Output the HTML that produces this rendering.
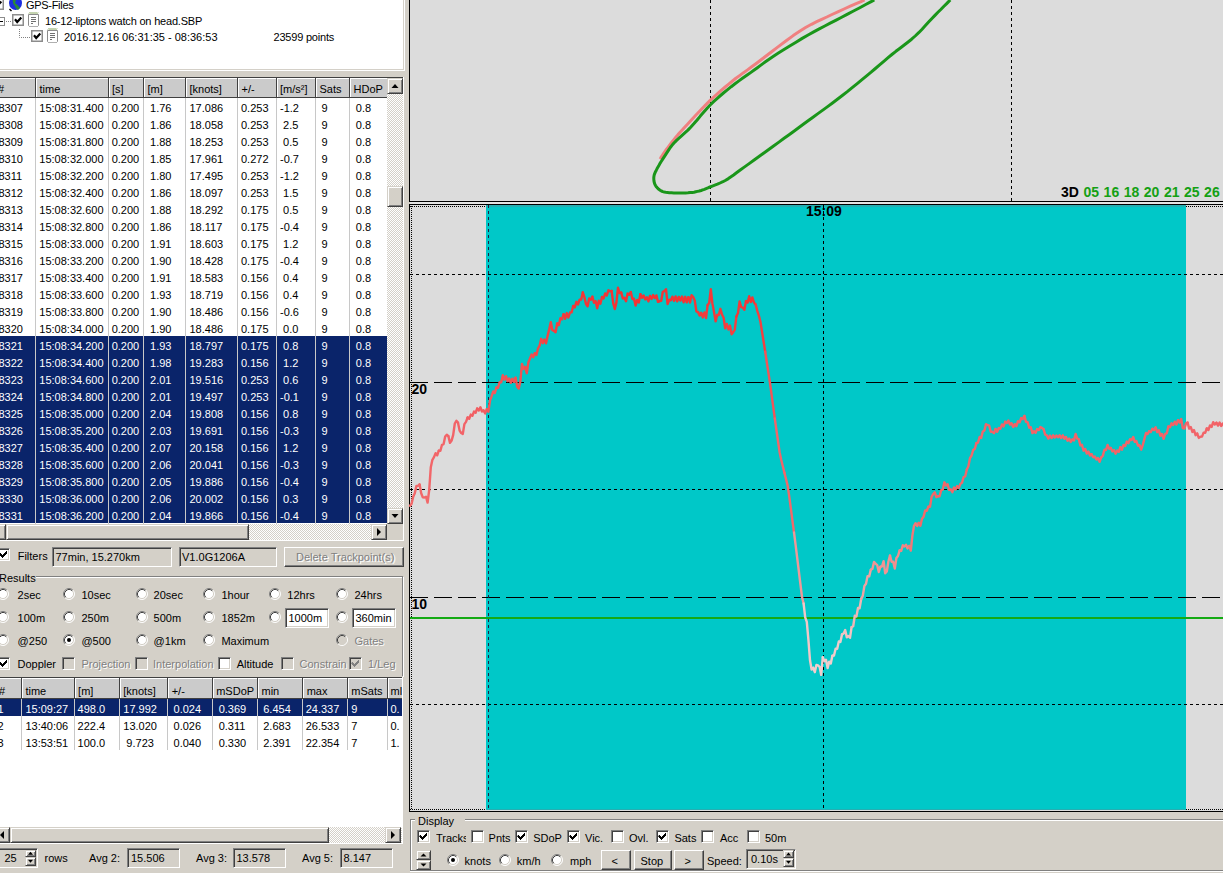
<!DOCTYPE html>
<html><head><meta charset="utf-8"><style>
html,body{margin:0;padding:0;}
body{width:1223px;height:873px;position:relative;overflow:hidden;background:#d4d0c8;font-family:"Liberation Sans", sans-serif;}
body div, body svg{position:absolute;box-sizing:content-box;}
.t{white-space:pre;}
</style></head><body>
<div style="left:0px;top:0px;width:1223px;height:873px;background:#d4d0c8"></div><div style="left:0px;top:0px;width:403px;height:69px;background:#fff"></div><div style="left:0px;top:69px;width:404px;height:1px;background:#d4d0c8"></div><div style="left:403px;top:0px;width:1px;height:70px;background:#d4d0c8"></div><div style="left:0px;top:70px;width:405px;height:1px;background:#fff"></div><div style="left:404px;top:0px;width:1px;height:71px;background:#fff"></div><svg style="left:-8px;top:-2px" width="12" height="12"><rect x="0.75" y="0.75" width="10.5" height="10.5" fill="#fff" stroke="#8c8c8c" stroke-width="1.5"/><polyline points="3,5.3 5.2,8 9.3,3.6" fill="none" stroke="#000" stroke-width="2.2"/></svg><svg style="left:8px;top:-3px" width="16" height="16"><ellipse cx="7.5" cy="6" rx="6.5" ry="7" fill="#1c2ee0"/><path d="M6 0 Q9 3 7 6 Q10 8 12 11 L10 13 Q7 11 7 9 Q4 7 5 2Z" fill="#2a8a3a"/><path d="M1.5 12 L3.5 14" stroke="#000" stroke-width="1.5"/></svg><div class="t" style="left:26px;top:0.49px;font-size:11px;line-height:11px;color:#000;letter-spacing:-0.3px">GPS-Files</div><div style="left:-2px;top:17px;width:5px;height:7px;border:1px solid #8c8c8c;background:#fff"></div><div style="left:0px;top:21px;width:3px;height:1px;background:#000"></div><svg style="left:6px;top:21px" width="6" height="1"><line x1="0" y1="0.5" x2="6" y2="0.5" stroke="#808080" stroke-dasharray="1 1"/></svg><svg style="left:12px;top:14px" width="12" height="12"><rect x="0.75" y="0.75" width="10.5" height="10.5" fill="#fff" stroke="#8c8c8c" stroke-width="1.5"/><polyline points="3,5.3 5.2,8 9.3,3.6" fill="none" stroke="#000" stroke-width="2.2"/></svg><svg style="left:28px;top:12px" width="12" height="16"><path d="M0.5 2.5 H10.5 V13.5 L9.5 14.5 H1.5 L0.5 13.5 Z" fill="#fff" stroke="#8c8c8c"/><path d="M1.5 14.5 H9.5" stroke="#b0b0b0"/><path d="M1 1.5 L2 0.5 L3 1.5 L4 0.5 L5 1.5 L6 0.5 L7 1.5 L8 0.5 L9 1.5 L10 0.5" stroke="#7a9a4a" fill="none"/><path d="M3 5.5h5M3 7.5h5M3 9.5h5M3 11.5h2" stroke="#707070"/></svg><div class="t" style="left:45px;top:15.99px;font-size:11px;line-height:11px;color:#000;letter-spacing:-0.2px">16-12-liptons watch on head.SBP</div><svg style="left:19px;top:29px" width="12" height="10"><path d="M0.5 0 V8.5 H12" stroke="#808080" fill="none" stroke-dasharray="1 1"/></svg><svg style="left:31px;top:30px" width="12" height="12"><rect x="0.75" y="0.75" width="10.5" height="10.5" fill="#fff" stroke="#8c8c8c" stroke-width="1.5"/><polyline points="3,5.3 5.2,8 9.3,3.6" fill="none" stroke="#000" stroke-width="2.2"/></svg><svg style="left:47px;top:28px" width="12" height="16"><path d="M0.5 2.5 H10.5 V13.5 L9.5 14.5 H1.5 L0.5 13.5 Z" fill="#fff" stroke="#8c8c8c"/><path d="M1.5 14.5 H9.5" stroke="#b0b0b0"/><path d="M1 1.5 L2 0.5 L3 1.5 L4 0.5 L5 1.5 L6 0.5 L7 1.5 L8 0.5 L9 1.5 L10 0.5" stroke="#7a9a4a" fill="none"/><path d="M3 5.5h5M3 7.5h5M3 9.5h5M3 11.5h2" stroke="#707070"/></svg><div class="t" style="left:64px;top:31.99px;font-size:11px;line-height:11px;color:#000;">2016.12.16 06:31:35 - 08:36:53</div><div class="t" style="left:273.5px;top:31.99px;font-size:11px;line-height:11px;color:#000;letter-spacing:-0.2px">23599 points</div><div style="left:0px;top:77px;width:403px;height:1px;background:#404040"></div><div style="left:0px;top:540px;width:404px;height:1px;background:#fff"></div><div style="left:403px;top:77px;width:1px;height:464px;background:#fff"></div><div style="left:0px;top:98px;width:387px;height:426px;background:#fff"></div><div style="left:0px;top:78px;width:387px;height:1px;background:#fff"></div><div style="left:0px;top:79px;width:387px;height:18px;background:#cbcbcb"></div><div style="left:0px;top:97px;width:387px;height:1px;background:#404040"></div><div style="left:35px;top:78px;width:1px;height:20px;background:#404040"></div><div style="left:36px;top:78px;width:1px;height:19px;background:#fff"></div><div style="left:108px;top:78px;width:1px;height:20px;background:#404040"></div><div style="left:109px;top:78px;width:1px;height:19px;background:#fff"></div><div style="left:143px;top:78px;width:1px;height:20px;background:#404040"></div><div style="left:144px;top:78px;width:1px;height:19px;background:#fff"></div><div style="left:185px;top:78px;width:1px;height:20px;background:#404040"></div><div style="left:186px;top:78px;width:1px;height:19px;background:#fff"></div><div style="left:237px;top:78px;width:1px;height:20px;background:#404040"></div><div style="left:238px;top:78px;width:1px;height:19px;background:#fff"></div><div style="left:276px;top:78px;width:1px;height:20px;background:#404040"></div><div style="left:277px;top:78px;width:1px;height:19px;background:#fff"></div><div style="left:315px;top:78px;width:1px;height:20px;background:#404040"></div><div style="left:316px;top:78px;width:1px;height:19px;background:#fff"></div><div style="left:349px;top:78px;width:1px;height:20px;background:#404040"></div><div style="left:350px;top:78px;width:1px;height:19px;background:#fff"></div><div class="t" style="left:-2px;top:84.19px;font-size:11px;line-height:11px;color:#000;">#</div><div class="t" style="left:39.5px;top:84.19px;font-size:11px;line-height:11px;color:#000;">time</div><div class="t" style="left:112px;top:84.19px;font-size:11px;line-height:11px;color:#000;">[s]</div><div class="t" style="left:147.5px;top:84.19px;font-size:11px;line-height:11px;color:#000;">[m]</div><div class="t" style="left:189.5px;top:84.19px;font-size:11px;line-height:11px;color:#000;">[knots]</div><div class="t" style="left:241.5px;top:84.19px;font-size:11px;line-height:11px;color:#000;">+/-</div><div class="t" style="left:280px;top:84.19px;font-size:11px;line-height:11px;color:#000;">[m/s²]</div><div class="t" style="left:319.5px;top:84.19px;font-size:11px;line-height:11px;color:#000;">Sats</div><div class="t" style="left:353.5px;top:84.19px;font-size:11px;line-height:11px;color:#000;">HDoP</div><div style="left:0px;top:336px;width:387px;height:187px;background:#0a246a"></div><div style="left:35px;top:98px;width:1px;height:426px;background:#c8c8c8"></div><div style="left:108px;top:98px;width:1px;height:426px;background:#c8c8c8"></div><div style="left:143px;top:98px;width:1px;height:426px;background:#c8c8c8"></div><div style="left:185px;top:98px;width:1px;height:426px;background:#c8c8c8"></div><div style="left:237px;top:98px;width:1px;height:426px;background:#c8c8c8"></div><div style="left:276px;top:98px;width:1px;height:426px;background:#c8c8c8"></div><div style="left:315px;top:98px;width:1px;height:426px;background:#c8c8c8"></div><div style="left:349px;top:98px;width:1px;height:426px;background:#c8c8c8"></div><div class="t" style="left:-1.5px;top:103.09px;font-size:11px;line-height:11px;color:#000;">8307</div><div class="t" style="left:39.3px;top:103.09px;font-size:11px;line-height:11px;color:#000;">15:08:31.400</div><div class="t" style="left:111.7px;top:103.09px;font-size:11px;line-height:11px;color:#000;">0.200</div><div class="t" style="left:150.06px;top:103.09px;font-size:11px;line-height:11px;color:#000;">1.76</div><div class="t" style="left:189.5px;top:103.09px;font-size:11px;line-height:11px;color:#000;">17.086</div><div class="t" style="left:241px;top:103.09px;font-size:11px;line-height:11px;color:#000;">0.253</div><div class="t" style="left:280px;top:103.09px;font-size:11px;line-height:11px;color:#000;">-1.2</div><div class="t" style="left:321.56px;top:103.09px;font-size:11px;line-height:11px;color:#000;">9</div><div class="t" style="left:355.86px;top:103.09px;font-size:11px;line-height:11px;color:#000;">0.8</div><div class="t" style="left:-1.5px;top:120.09px;font-size:11px;line-height:11px;color:#000;">8308</div><div class="t" style="left:39.3px;top:120.09px;font-size:11px;line-height:11px;color:#000;">15:08:31.600</div><div class="t" style="left:111.7px;top:120.09px;font-size:11px;line-height:11px;color:#000;">0.200</div><div class="t" style="left:150.06px;top:120.09px;font-size:11px;line-height:11px;color:#000;">1.86</div><div class="t" style="left:189.5px;top:120.09px;font-size:11px;line-height:11px;color:#000;">18.058</div><div class="t" style="left:241px;top:120.09px;font-size:11px;line-height:11px;color:#000;">0.253</div><div class="t" style="left:283.06px;top:120.09px;font-size:11px;line-height:11px;color:#000;">2.5</div><div class="t" style="left:321.56px;top:120.09px;font-size:11px;line-height:11px;color:#000;">9</div><div class="t" style="left:355.86px;top:120.09px;font-size:11px;line-height:11px;color:#000;">0.8</div><div class="t" style="left:-1.5px;top:137.09px;font-size:11px;line-height:11px;color:#000;">8309</div><div class="t" style="left:39.3px;top:137.09px;font-size:11px;line-height:11px;color:#000;">15:08:31.800</div><div class="t" style="left:111.7px;top:137.09px;font-size:11px;line-height:11px;color:#000;">0.200</div><div class="t" style="left:150.06px;top:137.09px;font-size:11px;line-height:11px;color:#000;">1.88</div><div class="t" style="left:189.5px;top:137.09px;font-size:11px;line-height:11px;color:#000;">18.253</div><div class="t" style="left:241px;top:137.09px;font-size:11px;line-height:11px;color:#000;">0.253</div><div class="t" style="left:283.06px;top:137.09px;font-size:11px;line-height:11px;color:#000;">0.5</div><div class="t" style="left:321.56px;top:137.09px;font-size:11px;line-height:11px;color:#000;">9</div><div class="t" style="left:355.86px;top:137.09px;font-size:11px;line-height:11px;color:#000;">0.8</div><div class="t" style="left:-1.5px;top:154.09px;font-size:11px;line-height:11px;color:#000;">8310</div><div class="t" style="left:39.3px;top:154.09px;font-size:11px;line-height:11px;color:#000;">15:08:32.000</div><div class="t" style="left:111.7px;top:154.09px;font-size:11px;line-height:11px;color:#000;">0.200</div><div class="t" style="left:150.06px;top:154.09px;font-size:11px;line-height:11px;color:#000;">1.85</div><div class="t" style="left:189.5px;top:154.09px;font-size:11px;line-height:11px;color:#000;">17.961</div><div class="t" style="left:241px;top:154.09px;font-size:11px;line-height:11px;color:#000;">0.272</div><div class="t" style="left:280px;top:154.09px;font-size:11px;line-height:11px;color:#000;">-0.7</div><div class="t" style="left:321.56px;top:154.09px;font-size:11px;line-height:11px;color:#000;">9</div><div class="t" style="left:355.86px;top:154.09px;font-size:11px;line-height:11px;color:#000;">0.8</div><div class="t" style="left:-1.5px;top:171.09px;font-size:11px;line-height:11px;color:#000;">8311</div><div class="t" style="left:39.3px;top:171.09px;font-size:11px;line-height:11px;color:#000;">15:08:32.200</div><div class="t" style="left:111.7px;top:171.09px;font-size:11px;line-height:11px;color:#000;">0.200</div><div class="t" style="left:150.06px;top:171.09px;font-size:11px;line-height:11px;color:#000;">1.80</div><div class="t" style="left:189.5px;top:171.09px;font-size:11px;line-height:11px;color:#000;">17.495</div><div class="t" style="left:241px;top:171.09px;font-size:11px;line-height:11px;color:#000;">0.253</div><div class="t" style="left:280px;top:171.09px;font-size:11px;line-height:11px;color:#000;">-1.2</div><div class="t" style="left:321.56px;top:171.09px;font-size:11px;line-height:11px;color:#000;">9</div><div class="t" style="left:355.86px;top:171.09px;font-size:11px;line-height:11px;color:#000;">0.8</div><div class="t" style="left:-1.5px;top:188.09px;font-size:11px;line-height:11px;color:#000;">8312</div><div class="t" style="left:39.3px;top:188.09px;font-size:11px;line-height:11px;color:#000;">15:08:32.400</div><div class="t" style="left:111.7px;top:188.09px;font-size:11px;line-height:11px;color:#000;">0.200</div><div class="t" style="left:150.06px;top:188.09px;font-size:11px;line-height:11px;color:#000;">1.86</div><div class="t" style="left:189.5px;top:188.09px;font-size:11px;line-height:11px;color:#000;">18.097</div><div class="t" style="left:241px;top:188.09px;font-size:11px;line-height:11px;color:#000;">0.253</div><div class="t" style="left:283.06px;top:188.09px;font-size:11px;line-height:11px;color:#000;">1.5</div><div class="t" style="left:321.56px;top:188.09px;font-size:11px;line-height:11px;color:#000;">9</div><div class="t" style="left:355.86px;top:188.09px;font-size:11px;line-height:11px;color:#000;">0.8</div><div class="t" style="left:-1.5px;top:205.09px;font-size:11px;line-height:11px;color:#000;">8313</div><div class="t" style="left:39.3px;top:205.09px;font-size:11px;line-height:11px;color:#000;">15:08:32.600</div><div class="t" style="left:111.7px;top:205.09px;font-size:11px;line-height:11px;color:#000;">0.200</div><div class="t" style="left:150.06px;top:205.09px;font-size:11px;line-height:11px;color:#000;">1.88</div><div class="t" style="left:189.5px;top:205.09px;font-size:11px;line-height:11px;color:#000;">18.292</div><div class="t" style="left:241px;top:205.09px;font-size:11px;line-height:11px;color:#000;">0.175</div><div class="t" style="left:283.06px;top:205.09px;font-size:11px;line-height:11px;color:#000;">0.5</div><div class="t" style="left:321.56px;top:205.09px;font-size:11px;line-height:11px;color:#000;">9</div><div class="t" style="left:355.86px;top:205.09px;font-size:11px;line-height:11px;color:#000;">0.8</div><div class="t" style="left:-1.5px;top:222.09px;font-size:11px;line-height:11px;color:#000;">8314</div><div class="t" style="left:39.3px;top:222.09px;font-size:11px;line-height:11px;color:#000;">15:08:32.800</div><div class="t" style="left:111.7px;top:222.09px;font-size:11px;line-height:11px;color:#000;">0.200</div><div class="t" style="left:150.06px;top:222.09px;font-size:11px;line-height:11px;color:#000;">1.86</div><div class="t" style="left:189.5px;top:222.09px;font-size:11px;line-height:11px;color:#000;">18.117</div><div class="t" style="left:241px;top:222.09px;font-size:11px;line-height:11px;color:#000;">0.175</div><div class="t" style="left:280px;top:222.09px;font-size:11px;line-height:11px;color:#000;">-0.4</div><div class="t" style="left:321.56px;top:222.09px;font-size:11px;line-height:11px;color:#000;">9</div><div class="t" style="left:355.86px;top:222.09px;font-size:11px;line-height:11px;color:#000;">0.8</div><div class="t" style="left:-1.5px;top:239.09px;font-size:11px;line-height:11px;color:#000;">8315</div><div class="t" style="left:39.3px;top:239.09px;font-size:11px;line-height:11px;color:#000;">15:08:33.000</div><div class="t" style="left:111.7px;top:239.09px;font-size:11px;line-height:11px;color:#000;">0.200</div><div class="t" style="left:150.06px;top:239.09px;font-size:11px;line-height:11px;color:#000;">1.91</div><div class="t" style="left:189.5px;top:239.09px;font-size:11px;line-height:11px;color:#000;">18.603</div><div class="t" style="left:241px;top:239.09px;font-size:11px;line-height:11px;color:#000;">0.175</div><div class="t" style="left:283.06px;top:239.09px;font-size:11px;line-height:11px;color:#000;">1.2</div><div class="t" style="left:321.56px;top:239.09px;font-size:11px;line-height:11px;color:#000;">9</div><div class="t" style="left:355.86px;top:239.09px;font-size:11px;line-height:11px;color:#000;">0.8</div><div class="t" style="left:-1.5px;top:256.09px;font-size:11px;line-height:11px;color:#000;">8316</div><div class="t" style="left:39.3px;top:256.09px;font-size:11px;line-height:11px;color:#000;">15:08:33.200</div><div class="t" style="left:111.7px;top:256.09px;font-size:11px;line-height:11px;color:#000;">0.200</div><div class="t" style="left:150.06px;top:256.09px;font-size:11px;line-height:11px;color:#000;">1.90</div><div class="t" style="left:189.5px;top:256.09px;font-size:11px;line-height:11px;color:#000;">18.428</div><div class="t" style="left:241px;top:256.09px;font-size:11px;line-height:11px;color:#000;">0.175</div><div class="t" style="left:280px;top:256.09px;font-size:11px;line-height:11px;color:#000;">-0.4</div><div class="t" style="left:321.56px;top:256.09px;font-size:11px;line-height:11px;color:#000;">9</div><div class="t" style="left:355.86px;top:256.09px;font-size:11px;line-height:11px;color:#000;">0.8</div><div class="t" style="left:-1.5px;top:273.09px;font-size:11px;line-height:11px;color:#000;">8317</div><div class="t" style="left:39.3px;top:273.09px;font-size:11px;line-height:11px;color:#000;">15:08:33.400</div><div class="t" style="left:111.7px;top:273.09px;font-size:11px;line-height:11px;color:#000;">0.200</div><div class="t" style="left:150.06px;top:273.09px;font-size:11px;line-height:11px;color:#000;">1.91</div><div class="t" style="left:189.5px;top:273.09px;font-size:11px;line-height:11px;color:#000;">18.583</div><div class="t" style="left:241px;top:273.09px;font-size:11px;line-height:11px;color:#000;">0.156</div><div class="t" style="left:283.06px;top:273.09px;font-size:11px;line-height:11px;color:#000;">0.4</div><div class="t" style="left:321.56px;top:273.09px;font-size:11px;line-height:11px;color:#000;">9</div><div class="t" style="left:355.86px;top:273.09px;font-size:11px;line-height:11px;color:#000;">0.8</div><div class="t" style="left:-1.5px;top:290.09px;font-size:11px;line-height:11px;color:#000;">8318</div><div class="t" style="left:39.3px;top:290.09px;font-size:11px;line-height:11px;color:#000;">15:08:33.600</div><div class="t" style="left:111.7px;top:290.09px;font-size:11px;line-height:11px;color:#000;">0.200</div><div class="t" style="left:150.06px;top:290.09px;font-size:11px;line-height:11px;color:#000;">1.93</div><div class="t" style="left:189.5px;top:290.09px;font-size:11px;line-height:11px;color:#000;">18.719</div><div class="t" style="left:241px;top:290.09px;font-size:11px;line-height:11px;color:#000;">0.156</div><div class="t" style="left:283.06px;top:290.09px;font-size:11px;line-height:11px;color:#000;">0.4</div><div class="t" style="left:321.56px;top:290.09px;font-size:11px;line-height:11px;color:#000;">9</div><div class="t" style="left:355.86px;top:290.09px;font-size:11px;line-height:11px;color:#000;">0.8</div><div class="t" style="left:-1.5px;top:307.09px;font-size:11px;line-height:11px;color:#000;">8319</div><div class="t" style="left:39.3px;top:307.09px;font-size:11px;line-height:11px;color:#000;">15:08:33.800</div><div class="t" style="left:111.7px;top:307.09px;font-size:11px;line-height:11px;color:#000;">0.200</div><div class="t" style="left:150.06px;top:307.09px;font-size:11px;line-height:11px;color:#000;">1.90</div><div class="t" style="left:189.5px;top:307.09px;font-size:11px;line-height:11px;color:#000;">18.486</div><div class="t" style="left:241px;top:307.09px;font-size:11px;line-height:11px;color:#000;">0.156</div><div class="t" style="left:280px;top:307.09px;font-size:11px;line-height:11px;color:#000;">-0.6</div><div class="t" style="left:321.56px;top:307.09px;font-size:11px;line-height:11px;color:#000;">9</div><div class="t" style="left:355.86px;top:307.09px;font-size:11px;line-height:11px;color:#000;">0.8</div><div class="t" style="left:-1.5px;top:324.09px;font-size:11px;line-height:11px;color:#000;">8320</div><div class="t" style="left:39.3px;top:324.09px;font-size:11px;line-height:11px;color:#000;">15:08:34.000</div><div class="t" style="left:111.7px;top:324.09px;font-size:11px;line-height:11px;color:#000;">0.200</div><div class="t" style="left:150.06px;top:324.09px;font-size:11px;line-height:11px;color:#000;">1.90</div><div class="t" style="left:189.5px;top:324.09px;font-size:11px;line-height:11px;color:#000;">18.486</div><div class="t" style="left:241px;top:324.09px;font-size:11px;line-height:11px;color:#000;">0.175</div><div class="t" style="left:283.06px;top:324.09px;font-size:11px;line-height:11px;color:#000;">0.0</div><div class="t" style="left:321.56px;top:324.09px;font-size:11px;line-height:11px;color:#000;">9</div><div class="t" style="left:355.86px;top:324.09px;font-size:11px;line-height:11px;color:#000;">0.8</div><div class="t" style="left:-1.5px;top:341.09px;font-size:11px;line-height:11px;color:#fff;">8321</div><div class="t" style="left:39.3px;top:341.09px;font-size:11px;line-height:11px;color:#fff;">15:08:34.200</div><div class="t" style="left:111.7px;top:341.09px;font-size:11px;line-height:11px;color:#fff;">0.200</div><div class="t" style="left:150.06px;top:341.09px;font-size:11px;line-height:11px;color:#fff;">1.93</div><div class="t" style="left:189.5px;top:341.09px;font-size:11px;line-height:11px;color:#fff;">18.797</div><div class="t" style="left:241px;top:341.09px;font-size:11px;line-height:11px;color:#fff;">0.175</div><div class="t" style="left:283.06px;top:341.09px;font-size:11px;line-height:11px;color:#fff;">0.8</div><div class="t" style="left:321.56px;top:341.09px;font-size:11px;line-height:11px;color:#fff;">9</div><div class="t" style="left:355.86px;top:341.09px;font-size:11px;line-height:11px;color:#fff;">0.8</div><div class="t" style="left:-1.5px;top:358.09px;font-size:11px;line-height:11px;color:#fff;">8322</div><div class="t" style="left:39.3px;top:358.09px;font-size:11px;line-height:11px;color:#fff;">15:08:34.400</div><div class="t" style="left:111.7px;top:358.09px;font-size:11px;line-height:11px;color:#fff;">0.200</div><div class="t" style="left:150.06px;top:358.09px;font-size:11px;line-height:11px;color:#fff;">1.98</div><div class="t" style="left:189.5px;top:358.09px;font-size:11px;line-height:11px;color:#fff;">19.283</div><div class="t" style="left:241px;top:358.09px;font-size:11px;line-height:11px;color:#fff;">0.156</div><div class="t" style="left:283.06px;top:358.09px;font-size:11px;line-height:11px;color:#fff;">1.2</div><div class="t" style="left:321.56px;top:358.09px;font-size:11px;line-height:11px;color:#fff;">9</div><div class="t" style="left:355.86px;top:358.09px;font-size:11px;line-height:11px;color:#fff;">0.8</div><div class="t" style="left:-1.5px;top:375.09px;font-size:11px;line-height:11px;color:#fff;">8323</div><div class="t" style="left:39.3px;top:375.09px;font-size:11px;line-height:11px;color:#fff;">15:08:34.600</div><div class="t" style="left:111.7px;top:375.09px;font-size:11px;line-height:11px;color:#fff;">0.200</div><div class="t" style="left:150.06px;top:375.09px;font-size:11px;line-height:11px;color:#fff;">2.01</div><div class="t" style="left:189.5px;top:375.09px;font-size:11px;line-height:11px;color:#fff;">19.516</div><div class="t" style="left:241px;top:375.09px;font-size:11px;line-height:11px;color:#fff;">0.253</div><div class="t" style="left:283.06px;top:375.09px;font-size:11px;line-height:11px;color:#fff;">0.6</div><div class="t" style="left:321.56px;top:375.09px;font-size:11px;line-height:11px;color:#fff;">9</div><div class="t" style="left:355.86px;top:375.09px;font-size:11px;line-height:11px;color:#fff;">0.8</div><div class="t" style="left:-1.5px;top:392.09px;font-size:11px;line-height:11px;color:#fff;">8324</div><div class="t" style="left:39.3px;top:392.09px;font-size:11px;line-height:11px;color:#fff;">15:08:34.800</div><div class="t" style="left:111.7px;top:392.09px;font-size:11px;line-height:11px;color:#fff;">0.200</div><div class="t" style="left:150.06px;top:392.09px;font-size:11px;line-height:11px;color:#fff;">2.01</div><div class="t" style="left:189.5px;top:392.09px;font-size:11px;line-height:11px;color:#fff;">19.497</div><div class="t" style="left:241px;top:392.09px;font-size:11px;line-height:11px;color:#fff;">0.253</div><div class="t" style="left:280px;top:392.09px;font-size:11px;line-height:11px;color:#fff;">-0.1</div><div class="t" style="left:321.56px;top:392.09px;font-size:11px;line-height:11px;color:#fff;">9</div><div class="t" style="left:355.86px;top:392.09px;font-size:11px;line-height:11px;color:#fff;">0.8</div><div class="t" style="left:-1.5px;top:409.09px;font-size:11px;line-height:11px;color:#fff;">8325</div><div class="t" style="left:39.3px;top:409.09px;font-size:11px;line-height:11px;color:#fff;">15:08:35.000</div><div class="t" style="left:111.7px;top:409.09px;font-size:11px;line-height:11px;color:#fff;">0.200</div><div class="t" style="left:150.06px;top:409.09px;font-size:11px;line-height:11px;color:#fff;">2.04</div><div class="t" style="left:189.5px;top:409.09px;font-size:11px;line-height:11px;color:#fff;">19.808</div><div class="t" style="left:241px;top:409.09px;font-size:11px;line-height:11px;color:#fff;">0.156</div><div class="t" style="left:283.06px;top:409.09px;font-size:11px;line-height:11px;color:#fff;">0.8</div><div class="t" style="left:321.56px;top:409.09px;font-size:11px;line-height:11px;color:#fff;">9</div><div class="t" style="left:355.86px;top:409.09px;font-size:11px;line-height:11px;color:#fff;">0.8</div><div class="t" style="left:-1.5px;top:426.09px;font-size:11px;line-height:11px;color:#fff;">8326</div><div class="t" style="left:39.3px;top:426.09px;font-size:11px;line-height:11px;color:#fff;">15:08:35.200</div><div class="t" style="left:111.7px;top:426.09px;font-size:11px;line-height:11px;color:#fff;">0.200</div><div class="t" style="left:150.06px;top:426.09px;font-size:11px;line-height:11px;color:#fff;">2.03</div><div class="t" style="left:189.5px;top:426.09px;font-size:11px;line-height:11px;color:#fff;">19.691</div><div class="t" style="left:241px;top:426.09px;font-size:11px;line-height:11px;color:#fff;">0.156</div><div class="t" style="left:280px;top:426.09px;font-size:11px;line-height:11px;color:#fff;">-0.3</div><div class="t" style="left:321.56px;top:426.09px;font-size:11px;line-height:11px;color:#fff;">9</div><div class="t" style="left:355.86px;top:426.09px;font-size:11px;line-height:11px;color:#fff;">0.8</div><div class="t" style="left:-1.5px;top:443.09px;font-size:11px;line-height:11px;color:#fff;">8327</div><div class="t" style="left:39.3px;top:443.09px;font-size:11px;line-height:11px;color:#fff;">15:08:35.400</div><div class="t" style="left:111.7px;top:443.09px;font-size:11px;line-height:11px;color:#fff;">0.200</div><div class="t" style="left:150.06px;top:443.09px;font-size:11px;line-height:11px;color:#fff;">2.07</div><div class="t" style="left:189.5px;top:443.09px;font-size:11px;line-height:11px;color:#fff;">20.158</div><div class="t" style="left:241px;top:443.09px;font-size:11px;line-height:11px;color:#fff;">0.156</div><div class="t" style="left:283.06px;top:443.09px;font-size:11px;line-height:11px;color:#fff;">1.2</div><div class="t" style="left:321.56px;top:443.09px;font-size:11px;line-height:11px;color:#fff;">9</div><div class="t" style="left:355.86px;top:443.09px;font-size:11px;line-height:11px;color:#fff;">0.8</div><div class="t" style="left:-1.5px;top:460.09px;font-size:11px;line-height:11px;color:#fff;">8328</div><div class="t" style="left:39.3px;top:460.09px;font-size:11px;line-height:11px;color:#fff;">15:08:35.600</div><div class="t" style="left:111.7px;top:460.09px;font-size:11px;line-height:11px;color:#fff;">0.200</div><div class="t" style="left:150.06px;top:460.09px;font-size:11px;line-height:11px;color:#fff;">2.06</div><div class="t" style="left:189.5px;top:460.09px;font-size:11px;line-height:11px;color:#fff;">20.041</div><div class="t" style="left:241px;top:460.09px;font-size:11px;line-height:11px;color:#fff;">0.156</div><div class="t" style="left:280px;top:460.09px;font-size:11px;line-height:11px;color:#fff;">-0.3</div><div class="t" style="left:321.56px;top:460.09px;font-size:11px;line-height:11px;color:#fff;">9</div><div class="t" style="left:355.86px;top:460.09px;font-size:11px;line-height:11px;color:#fff;">0.8</div><div class="t" style="left:-1.5px;top:477.09px;font-size:11px;line-height:11px;color:#fff;">8329</div><div class="t" style="left:39.3px;top:477.09px;font-size:11px;line-height:11px;color:#fff;">15:08:35.800</div><div class="t" style="left:111.7px;top:477.09px;font-size:11px;line-height:11px;color:#fff;">0.200</div><div class="t" style="left:150.06px;top:477.09px;font-size:11px;line-height:11px;color:#fff;">2.05</div><div class="t" style="left:189.5px;top:477.09px;font-size:11px;line-height:11px;color:#fff;">19.886</div><div class="t" style="left:241px;top:477.09px;font-size:11px;line-height:11px;color:#fff;">0.156</div><div class="t" style="left:280px;top:477.09px;font-size:11px;line-height:11px;color:#fff;">-0.4</div><div class="t" style="left:321.56px;top:477.09px;font-size:11px;line-height:11px;color:#fff;">9</div><div class="t" style="left:355.86px;top:477.09px;font-size:11px;line-height:11px;color:#fff;">0.8</div><div class="t" style="left:-1.5px;top:494.09px;font-size:11px;line-height:11px;color:#fff;">8330</div><div class="t" style="left:39.3px;top:494.09px;font-size:11px;line-height:11px;color:#fff;">15:08:36.000</div><div class="t" style="left:111.7px;top:494.09px;font-size:11px;line-height:11px;color:#fff;">0.200</div><div class="t" style="left:150.06px;top:494.09px;font-size:11px;line-height:11px;color:#fff;">2.06</div><div class="t" style="left:189.5px;top:494.09px;font-size:11px;line-height:11px;color:#fff;">20.002</div><div class="t" style="left:241px;top:494.09px;font-size:11px;line-height:11px;color:#fff;">0.156</div><div class="t" style="left:283.06px;top:494.09px;font-size:11px;line-height:11px;color:#fff;">0.3</div><div class="t" style="left:321.56px;top:494.09px;font-size:11px;line-height:11px;color:#fff;">9</div><div class="t" style="left:355.86px;top:494.09px;font-size:11px;line-height:11px;color:#fff;">0.8</div><div class="t" style="left:-1.5px;top:511.09px;font-size:11px;line-height:11px;color:#fff;">8331</div><div class="t" style="left:39.3px;top:511.09px;font-size:11px;line-height:11px;color:#fff;">15:08:36.200</div><div class="t" style="left:111.7px;top:511.09px;font-size:11px;line-height:11px;color:#fff;">0.200</div><div class="t" style="left:150.06px;top:511.09px;font-size:11px;line-height:11px;color:#fff;">2.04</div><div class="t" style="left:189.5px;top:511.09px;font-size:11px;line-height:11px;color:#fff;">19.866</div><div class="t" style="left:241px;top:511.09px;font-size:11px;line-height:11px;color:#fff;">0.156</div><div class="t" style="left:280px;top:511.09px;font-size:11px;line-height:11px;color:#fff;">-0.4</div><div class="t" style="left:321.56px;top:511.09px;font-size:11px;line-height:11px;color:#fff;">9</div><div class="t" style="left:355.86px;top:511.09px;font-size:11px;line-height:11px;color:#fff;">0.8</div><div style="left:387px;top:94px;width:16px;height:414px;background-color:#d4d0c8;background-image:conic-gradient(#fff 25%, transparent 0 50%, #fff 0 75%, transparent 0);background-size:2px 2px;"></div><div style="left:387px;top:78px;width:14px;height:14px;background:#d4d0c8;border:1px solid;border-color:#d4d0c8 #404040 #404040 #d4d0c8;box-shadow:inset 1px 1px #fff, inset -1px -1px #808080;"></div><svg style="left:0;top:0" width="1223" height="873"><polygon points="391.5,88.0 398.5,88.0 395.0,84.0" fill="#000"/></svg><div style="left:387px;top:186px;width:14px;height:19px;background:#d4d0c8;border:1px solid;border-color:#d4d0c8 #404040 #404040 #d4d0c8;box-shadow:inset 1px 1px #fff, inset -1px -1px #808080;"></div><div style="left:387px;top:508px;width:14px;height:14px;background:#d4d0c8;border:1px solid;border-color:#d4d0c8 #404040 #404040 #d4d0c8;box-shadow:inset 1px 1px #fff, inset -1px -1px #808080;"></div><svg style="left:0;top:0" width="1223" height="873"><polygon points="391.5,514.0 398.5,514.0 395.0,518.0" fill="#000"/></svg><div style="left:0px;top:524px;width:387px;height:16px;background-color:#d4d0c8;background-image:conic-gradient(#fff 25%, transparent 0 50%, #fff 0 75%, transparent 0);background-size:2px 2px;"></div><div style="left:-10px;top:524px;width:14px;height:14px;background:#d4d0c8;border:1px solid;border-color:#d4d0c8 #404040 #404040 #d4d0c8;box-shadow:inset 1px 1px #fff, inset -1px -1px #808080;"></div><svg style="left:0;top:0" width="1223" height="873"><polygon points="0.0,528.0 0.0,536.0 -4.0,532.0" fill="#000"/></svg><div style="left:6px;top:524px;width:241px;height:14px;background:#d4d0c8;border:1px solid;border-color:#d4d0c8 #404040 #404040 #d4d0c8;box-shadow:inset 1px 1px #fff, inset -1px -1px #808080;"></div><div style="left:371px;top:524px;width:14px;height:14px;background:#d4d0c8;border:1px solid;border-color:#d4d0c8 #404040 #404040 #d4d0c8;box-shadow:inset 1px 1px #fff, inset -1px -1px #808080;"></div><svg style="left:0;top:0" width="1223" height="873"><polygon points="377.0,528.0 377.0,536.0 381.0,532.0" fill="#000"/></svg><div style="left:387px;top:524px;width:16px;height:16px;background:#d4d0c8"></div><div style="left:-3px;top:548px;width:11px;height:11px;background:#fff;border:1px solid;border-color:#808080 #fff #fff #808080;box-shadow:inset 1px 1px #404040, inset -1px -1px #d4d0c8;"></div><svg style="left:-3px;top:548px" width="13" height="13"><path d="M3 5h1v1h1v1h1v-1h1v-1h1v-1h1v-1h1v3h-1v1h-1v1h-1v1h-1v1h-1v-1h-1v-1h-1v-1h-1z" fill="#000"/></svg><div class="t" style="left:17.7px;top:551.19px;font-size:11px;line-height:11px;color:#000;">Filters</div><div style="left:52px;top:547px;width:118px;height:18px;background:#d4d0c8;border:1px solid;border-color:#808080 #fff #fff #808080;box-shadow:inset 1px 1px #404040, inset -1px -1px #d4d0c8;"></div><div class="t" style="left:55.5px;top:552.49px;font-size:11px;line-height:11px;color:#000;">77min, 15.270km</div><div style="left:179px;top:547px;width:96px;height:18px;background:#d4d0c8;border:1px solid;border-color:#808080 #fff #fff #808080;box-shadow:inset 1px 1px #404040, inset -1px -1px #d4d0c8;"></div><div class="t" style="left:182px;top:552.49px;font-size:11px;line-height:11px;color:#000;">V1.0G1206A</div><div style="left:284px;top:547px;width:118px;height:18px;background:#d4d0c8;border:1px solid;border-color:#fff #404040 #404040 #fff;box-shadow:inset -1px -1px #808080;"></div><div class="t" style="left:296.5px;top:552.49px;font-size:11px;line-height:11px;color:#fff;margin-left:1px;margin-top:1px;">Delete Trackpoint(s)</div><div class="t" style="left:296px;top:551.99px;font-size:11px;line-height:11px;color:#808080;">Delete Trackpoint(s)</div><div style="left:36px;top:576px;width:367px;height:1px;background:#808080"></div><div style="left:36px;top:577px;width:368px;height:1px;background:#fff"></div><div style="left:402px;top:576px;width:1px;height:100px;background:#808080"></div><div style="left:403px;top:577px;width:1px;height:100px;background:#fff"></div><div class="t" style="left:-1px;top:573.49px;font-size:11px;line-height:11px;color:#000;">Results</div><svg style="left:-3px;top:588px" width="12" height="12"><circle cx="6" cy="6" r="5" fill="#fff"/><path d="M2.11 9.89 A5.5 5.5 0 0 1 9.89 2.11" stroke="#808080" fill="none"/><path d="M9.89 2.11 A5.5 5.5 0 0 1 2.11 9.89" stroke="#fff" fill="none"/><path d="M2.82 9.18 A4.5 4.5 0 0 1 9.18 2.82" stroke="#404040" fill="none"/><path d="M9.18 2.82 A4.5 4.5 0 0 1 2.82 9.18" stroke="#d4d0c8" fill="none"/></svg><div class="t" style="left:17.6px;top:589.99px;font-size:11px;line-height:11px;color:#000;">2sec</div><svg style="left:63px;top:588px" width="12" height="12"><circle cx="6" cy="6" r="5" fill="#fff"/><path d="M2.11 9.89 A5.5 5.5 0 0 1 9.89 2.11" stroke="#808080" fill="none"/><path d="M9.89 2.11 A5.5 5.5 0 0 1 2.11 9.89" stroke="#fff" fill="none"/><path d="M2.82 9.18 A4.5 4.5 0 0 1 9.18 2.82" stroke="#404040" fill="none"/><path d="M9.18 2.82 A4.5 4.5 0 0 1 2.82 9.18" stroke="#d4d0c8" fill="none"/></svg><div class="t" style="left:81.4px;top:589.99px;font-size:11px;line-height:11px;color:#000;">10sec</div><svg style="left:135.5px;top:588px" width="12" height="12"><circle cx="6" cy="6" r="5" fill="#fff"/><path d="M2.11 9.89 A5.5 5.5 0 0 1 9.89 2.11" stroke="#808080" fill="none"/><path d="M9.89 2.11 A5.5 5.5 0 0 1 2.11 9.89" stroke="#fff" fill="none"/><path d="M2.82 9.18 A4.5 4.5 0 0 1 9.18 2.82" stroke="#404040" fill="none"/><path d="M9.18 2.82 A4.5 4.5 0 0 1 2.82 9.18" stroke="#d4d0c8" fill="none"/></svg><div class="t" style="left:153.6px;top:589.99px;font-size:11px;line-height:11px;color:#000;">20sec</div><svg style="left:202.5px;top:588px" width="12" height="12"><circle cx="6" cy="6" r="5" fill="#fff"/><path d="M2.11 9.89 A5.5 5.5 0 0 1 9.89 2.11" stroke="#808080" fill="none"/><path d="M9.89 2.11 A5.5 5.5 0 0 1 2.11 9.89" stroke="#fff" fill="none"/><path d="M2.82 9.18 A4.5 4.5 0 0 1 9.18 2.82" stroke="#404040" fill="none"/><path d="M9.18 2.82 A4.5 4.5 0 0 1 2.82 9.18" stroke="#d4d0c8" fill="none"/></svg><div class="t" style="left:221.4px;top:589.99px;font-size:11px;line-height:11px;color:#000;">1hour</div><svg style="left:269px;top:588px" width="12" height="12"><circle cx="6" cy="6" r="5" fill="#fff"/><path d="M2.11 9.89 A5.5 5.5 0 0 1 9.89 2.11" stroke="#808080" fill="none"/><path d="M9.89 2.11 A5.5 5.5 0 0 1 2.11 9.89" stroke="#fff" fill="none"/><path d="M2.82 9.18 A4.5 4.5 0 0 1 9.18 2.82" stroke="#404040" fill="none"/><path d="M9.18 2.82 A4.5 4.5 0 0 1 2.82 9.18" stroke="#d4d0c8" fill="none"/></svg><div class="t" style="left:287.3px;top:589.99px;font-size:11px;line-height:11px;color:#000;">12hrs</div><svg style="left:336px;top:588px" width="12" height="12"><circle cx="6" cy="6" r="5" fill="#fff"/><path d="M2.11 9.89 A5.5 5.5 0 0 1 9.89 2.11" stroke="#808080" fill="none"/><path d="M9.89 2.11 A5.5 5.5 0 0 1 2.11 9.89" stroke="#fff" fill="none"/><path d="M2.82 9.18 A4.5 4.5 0 0 1 9.18 2.82" stroke="#404040" fill="none"/><path d="M9.18 2.82 A4.5 4.5 0 0 1 2.82 9.18" stroke="#d4d0c8" fill="none"/></svg><div class="t" style="left:354.5px;top:589.99px;font-size:11px;line-height:11px;color:#000;">24hrs</div><svg style="left:-3px;top:611px" width="12" height="12"><circle cx="6" cy="6" r="5" fill="#fff"/><path d="M2.11 9.89 A5.5 5.5 0 0 1 9.89 2.11" stroke="#808080" fill="none"/><path d="M9.89 2.11 A5.5 5.5 0 0 1 2.11 9.89" stroke="#fff" fill="none"/><path d="M2.82 9.18 A4.5 4.5 0 0 1 9.18 2.82" stroke="#404040" fill="none"/><path d="M9.18 2.82 A4.5 4.5 0 0 1 2.82 9.18" stroke="#d4d0c8" fill="none"/></svg><div class="t" style="left:17.6px;top:612.99px;font-size:11px;line-height:11px;color:#000;">100m</div><svg style="left:63px;top:611px" width="12" height="12"><circle cx="6" cy="6" r="5" fill="#fff"/><path d="M2.11 9.89 A5.5 5.5 0 0 1 9.89 2.11" stroke="#808080" fill="none"/><path d="M9.89 2.11 A5.5 5.5 0 0 1 2.11 9.89" stroke="#fff" fill="none"/><path d="M2.82 9.18 A4.5 4.5 0 0 1 9.18 2.82" stroke="#404040" fill="none"/><path d="M9.18 2.82 A4.5 4.5 0 0 1 2.82 9.18" stroke="#d4d0c8" fill="none"/></svg><div class="t" style="left:81.4px;top:612.99px;font-size:11px;line-height:11px;color:#000;">250m</div><svg style="left:135.5px;top:611px" width="12" height="12"><circle cx="6" cy="6" r="5" fill="#fff"/><path d="M2.11 9.89 A5.5 5.5 0 0 1 9.89 2.11" stroke="#808080" fill="none"/><path d="M9.89 2.11 A5.5 5.5 0 0 1 2.11 9.89" stroke="#fff" fill="none"/><path d="M2.82 9.18 A4.5 4.5 0 0 1 9.18 2.82" stroke="#404040" fill="none"/><path d="M9.18 2.82 A4.5 4.5 0 0 1 2.82 9.18" stroke="#d4d0c8" fill="none"/></svg><div class="t" style="left:153.6px;top:612.99px;font-size:11px;line-height:11px;color:#000;">500m</div><svg style="left:202.5px;top:611px" width="12" height="12"><circle cx="6" cy="6" r="5" fill="#fff"/><path d="M2.11 9.89 A5.5 5.5 0 0 1 9.89 2.11" stroke="#808080" fill="none"/><path d="M9.89 2.11 A5.5 5.5 0 0 1 2.11 9.89" stroke="#fff" fill="none"/><path d="M2.82 9.18 A4.5 4.5 0 0 1 9.18 2.82" stroke="#404040" fill="none"/><path d="M9.18 2.82 A4.5 4.5 0 0 1 2.82 9.18" stroke="#d4d0c8" fill="none"/></svg><div class="t" style="left:221.4px;top:612.99px;font-size:11px;line-height:11px;color:#000;">1852m</div><svg style="left:-3px;top:634px" width="12" height="12"><circle cx="6" cy="6" r="5" fill="#fff"/><path d="M2.11 9.89 A5.5 5.5 0 0 1 9.89 2.11" stroke="#808080" fill="none"/><path d="M9.89 2.11 A5.5 5.5 0 0 1 2.11 9.89" stroke="#fff" fill="none"/><path d="M2.82 9.18 A4.5 4.5 0 0 1 9.18 2.82" stroke="#404040" fill="none"/><path d="M9.18 2.82 A4.5 4.5 0 0 1 2.82 9.18" stroke="#d4d0c8" fill="none"/></svg><div class="t" style="left:17.6px;top:635.99px;font-size:11px;line-height:11px;color:#000;">@250</div><svg style="left:63px;top:634px" width="12" height="12"><circle cx="6" cy="6" r="5" fill="#fff"/><path d="M2.11 9.89 A5.5 5.5 0 0 1 9.89 2.11" stroke="#808080" fill="none"/><path d="M9.89 2.11 A5.5 5.5 0 0 1 2.11 9.89" stroke="#fff" fill="none"/><path d="M2.82 9.18 A4.5 4.5 0 0 1 9.18 2.82" stroke="#404040" fill="none"/><path d="M9.18 2.82 A4.5 4.5 0 0 1 2.82 9.18" stroke="#d4d0c8" fill="none"/><circle cx="6" cy="6" r="2" fill="#000"/></svg><div class="t" style="left:81.4px;top:635.99px;font-size:11px;line-height:11px;color:#000;">@500</div><svg style="left:135.5px;top:634px" width="12" height="12"><circle cx="6" cy="6" r="5" fill="#fff"/><path d="M2.11 9.89 A5.5 5.5 0 0 1 9.89 2.11" stroke="#808080" fill="none"/><path d="M9.89 2.11 A5.5 5.5 0 0 1 2.11 9.89" stroke="#fff" fill="none"/><path d="M2.82 9.18 A4.5 4.5 0 0 1 9.18 2.82" stroke="#404040" fill="none"/><path d="M9.18 2.82 A4.5 4.5 0 0 1 2.82 9.18" stroke="#d4d0c8" fill="none"/></svg><div class="t" style="left:153.6px;top:635.99px;font-size:11px;line-height:11px;color:#000;">@1km</div><svg style="left:202.5px;top:634px" width="12" height="12"><circle cx="6" cy="6" r="5" fill="#fff"/><path d="M2.11 9.89 A5.5 5.5 0 0 1 9.89 2.11" stroke="#808080" fill="none"/><path d="M9.89 2.11 A5.5 5.5 0 0 1 2.11 9.89" stroke="#fff" fill="none"/><path d="M2.82 9.18 A4.5 4.5 0 0 1 9.18 2.82" stroke="#404040" fill="none"/><path d="M9.18 2.82 A4.5 4.5 0 0 1 2.82 9.18" stroke="#d4d0c8" fill="none"/></svg><div class="t" style="left:221.4px;top:635.99px;font-size:11px;line-height:11px;color:#000;">Maximum</div><svg style="left:269px;top:611px" width="12" height="12"><circle cx="6" cy="6" r="5" fill="#fff"/><path d="M2.11 9.89 A5.5 5.5 0 0 1 9.89 2.11" stroke="#808080" fill="none"/><path d="M9.89 2.11 A5.5 5.5 0 0 1 2.11 9.89" stroke="#fff" fill="none"/><path d="M2.82 9.18 A4.5 4.5 0 0 1 9.18 2.82" stroke="#404040" fill="none"/><path d="M9.18 2.82 A4.5 4.5 0 0 1 2.82 9.18" stroke="#d4d0c8" fill="none"/></svg><div style="left:285px;top:607.5px;width:42px;height:18px;background:#fff;border:1px solid;border-color:#808080 #fff #fff #808080;box-shadow:inset 1px 1px #404040, inset -1px -1px #d4d0c8;"></div><div class="t" style="left:288.5px;top:612.99px;font-size:11px;line-height:11px;color:#000;">1000m</div><svg style="left:336px;top:611px" width="12" height="12"><circle cx="6" cy="6" r="5" fill="#fff"/><path d="M2.11 9.89 A5.5 5.5 0 0 1 9.89 2.11" stroke="#808080" fill="none"/><path d="M9.89 2.11 A5.5 5.5 0 0 1 2.11 9.89" stroke="#fff" fill="none"/><path d="M2.82 9.18 A4.5 4.5 0 0 1 9.18 2.82" stroke="#404040" fill="none"/><path d="M9.18 2.82 A4.5 4.5 0 0 1 2.82 9.18" stroke="#d4d0c8" fill="none"/></svg><div style="left:352px;top:607.5px;width:42px;height:18px;background:#fff;border:1px solid;border-color:#808080 #fff #fff #808080;box-shadow:inset 1px 1px #404040, inset -1px -1px #d4d0c8;"></div><div class="t" style="left:355.5px;top:612.99px;font-size:11px;line-height:11px;color:#000;">360min</div><svg style="left:336px;top:634px" width="12" height="12"><circle cx="6" cy="6" r="5" fill="#d4d0c8"/><path d="M2.11 9.89 A5.5 5.5 0 0 1 9.89 2.11" stroke="#808080" fill="none"/><path d="M9.89 2.11 A5.5 5.5 0 0 1 2.11 9.89" stroke="#fff" fill="none"/><path d="M2.82 9.18 A4.5 4.5 0 0 1 9.18 2.82" stroke="#404040" fill="none"/><path d="M9.18 2.82 A4.5 4.5 0 0 1 2.82 9.18" stroke="#d4d0c8" fill="none"/></svg><div class="t" style="left:355.5px;top:636.99px;font-size:11px;line-height:11px;color:#fff;">Gates</div><div class="t" style="left:354.5px;top:635.99px;font-size:11px;line-height:11px;color:#808080;">Gates</div><div style="left:-3px;top:657px;width:11px;height:11px;background:#fff;border:1px solid;border-color:#808080 #fff #fff #808080;box-shadow:inset 1px 1px #404040, inset -1px -1px #d4d0c8;"></div><svg style="left:-3px;top:657px" width="13" height="13"><path d="M3 5h1v1h1v1h1v-1h1v-1h1v-1h1v-1h1v3h-1v1h-1v1h-1v1h-1v1h-1v-1h-1v-1h-1v-1h-1z" fill="#000"/></svg><div class="t" style="left:17.5px;top:659.49px;font-size:11px;line-height:11px;color:#000;">Doppler</div><div style="left:62px;top:657px;width:11px;height:11px;background:#d4d0c8;border:1px solid;border-color:#808080 #fff #fff #808080;box-shadow:inset 1px 1px #404040, inset -1px -1px #d4d0c8;"></div><div class="t" style="left:82.5px;top:660.49px;font-size:11px;line-height:11px;color:#fff;">Projection</div><div class="t" style="left:81.5px;top:659.49px;font-size:11px;line-height:11px;color:#808080;">Projection</div><div style="left:134.5px;top:657px;width:11px;height:11px;background:#d4d0c8;border:1px solid;border-color:#808080 #fff #fff #808080;box-shadow:inset 1px 1px #404040, inset -1px -1px #d4d0c8;"></div><div class="t" style="left:154px;top:660.49px;font-size:11px;line-height:11px;color:#fff;">Interpolation</div><div class="t" style="left:153px;top:659.49px;font-size:11px;line-height:11px;color:#808080;">Interpolation</div><div style="left:218px;top:657px;width:11px;height:11px;background:#fff;border:1px solid;border-color:#808080 #fff #fff #808080;box-shadow:inset 1px 1px #404040, inset -1px -1px #d4d0c8;"></div><div class="t" style="left:236.7px;top:659.49px;font-size:11px;line-height:11px;color:#000;">Altitude</div><div style="left:280.5px;top:657px;width:11px;height:11px;background:#d4d0c8;border:1px solid;border-color:#808080 #fff #fff #808080;box-shadow:inset 1px 1px #404040, inset -1px -1px #d4d0c8;"></div><div class="t" style="left:300.5px;top:660.49px;font-size:11px;line-height:11px;color:#fff;">Constrain</div><div class="t" style="left:299.5px;top:659.49px;font-size:11px;line-height:11px;color:#808080;">Constrain</div><div style="left:349px;top:657px;width:11px;height:11px;background:#d4d0c8;border:1px solid;border-color:#808080 #fff #fff #808080;box-shadow:inset 1px 1px #404040, inset -1px -1px #d4d0c8;"></div><svg style="left:349px;top:657px" width="13" height="13"><path d="M3 5h1v1h1v1h1v-1h1v-1h1v-1h1v-1h1v3h-1v1h-1v1h-1v1h-1v1h-1v-1h-1v-1h-1v-1h-1z" fill="#808080"/></svg><div class="t" style="left:369px;top:660.49px;font-size:11px;line-height:11px;color:#fff;">1/Leg</div><div class="t" style="left:368px;top:659.49px;font-size:11px;line-height:11px;color:#808080;">1/Leg</div><div style="left:0px;top:677px;width:403px;height:1px;background:#404040"></div><div style="left:402px;top:677px;width:1px;height:167px;background:#fff"></div><div style="left:0px;top:843px;width:403px;height:1px;background:#fff"></div><div style="left:0px;top:699px;width:402px;height:128px;background:#fff"></div><div style="left:0px;top:678px;width:402px;height:1px;background:#fff"></div><div style="left:0px;top:679px;width:402px;height:19px;background:#cbcbcb"></div><div style="left:0px;top:698px;width:402px;height:1px;background:#404040"></div><div style="left:21px;top:678px;width:1px;height:21px;background:#404040"></div><div style="left:22px;top:678px;width:1px;height:20px;background:#fff"></div><div style="left:74px;top:678px;width:1px;height:21px;background:#404040"></div><div style="left:75px;top:678px;width:1px;height:20px;background:#fff"></div><div style="left:119px;top:678px;width:1px;height:21px;background:#404040"></div><div style="left:120px;top:678px;width:1px;height:20px;background:#fff"></div><div style="left:167px;top:678px;width:1px;height:21px;background:#404040"></div><div style="left:168px;top:678px;width:1px;height:20px;background:#fff"></div><div style="left:212px;top:678px;width:1px;height:21px;background:#404040"></div><div style="left:213px;top:678px;width:1px;height:20px;background:#fff"></div><div style="left:257px;top:678px;width:1px;height:21px;background:#404040"></div><div style="left:258px;top:678px;width:1px;height:20px;background:#fff"></div><div style="left:302px;top:678px;width:1px;height:21px;background:#404040"></div><div style="left:303px;top:678px;width:1px;height:20px;background:#fff"></div><div style="left:347px;top:678px;width:1px;height:21px;background:#404040"></div><div style="left:348px;top:678px;width:1px;height:20px;background:#fff"></div><div style="left:387px;top:678px;width:1px;height:21px;background:#404040"></div><div style="left:388px;top:678px;width:1px;height:20px;background:#fff"></div><div class="t" style="left:-1px;top:685.69px;font-size:11px;line-height:11px;color:#000;">#</div><div class="t" style="left:25.4px;top:685.69px;font-size:11px;line-height:11px;color:#000;">time</div><div class="t" style="left:78.1px;top:685.69px;font-size:11px;line-height:11px;color:#000;">[m]</div><div class="t" style="left:123.3px;top:685.69px;font-size:11px;line-height:11px;color:#000;">[knots]</div><div class="t" style="left:171.7px;top:685.69px;font-size:11px;line-height:11px;color:#000;">+/-</div><div class="t" style="left:216.2px;top:685.69px;font-size:11px;line-height:11px;color:#000;">mSDoP</div><div class="t" style="left:261.5px;top:685.69px;font-size:11px;line-height:11px;color:#000;">min</div><div class="t" style="left:306.7px;top:685.69px;font-size:11px;line-height:11px;color:#000;">max</div><div class="t" style="left:351.3px;top:685.69px;font-size:11px;line-height:11px;color:#000;">mSats</div><div class="t" style="left:390.5px;top:685.69px;font-size:11px;line-height:11px;color:#000;">ml</div><div style="left:0px;top:699px;width:402px;height:17px;background:#0a246a"></div><div style="left:21px;top:699px;width:1px;height:51px;background:#c8c8c8"></div><div style="left:74px;top:699px;width:1px;height:51px;background:#c8c8c8"></div><div style="left:119px;top:699px;width:1px;height:51px;background:#c8c8c8"></div><div style="left:167px;top:699px;width:1px;height:51px;background:#c8c8c8"></div><div style="left:212px;top:699px;width:1px;height:51px;background:#c8c8c8"></div><div style="left:257px;top:699px;width:1px;height:51px;background:#c8c8c8"></div><div style="left:302px;top:699px;width:1px;height:51px;background:#c8c8c8"></div><div style="left:347px;top:699px;width:1px;height:51px;background:#c8c8c8"></div><div style="left:387px;top:699px;width:1px;height:51px;background:#c8c8c8"></div><div class="t" style="left:-2.5px;top:704.19px;font-size:11px;line-height:11px;color:#fff;">1</div><div class="t" style="left:25.4px;top:704.19px;font-size:11px;line-height:11px;color:#fff;">15:09:27</div><div class="t" style="left:77.6px;top:704.19px;font-size:11px;line-height:11px;color:#fff;">498.0</div><div class="t" style="left:123.3px;top:704.19px;font-size:11px;line-height:11px;color:#fff;">17.992</div><div class="t" style="left:173.56px;top:704.19px;font-size:11px;line-height:11px;color:#fff;">0.024</div><div class="t" style="left:218.66px;top:704.19px;font-size:11px;line-height:11px;color:#fff;">0.369</div><div class="t" style="left:263.26px;top:704.19px;font-size:11px;line-height:11px;color:#fff;">6.454</div><div class="t" style="left:305.7px;top:704.19px;font-size:11px;line-height:11px;color:#fff;">24.337</div><div class="t" style="left:351.3px;top:704.19px;font-size:11px;line-height:11px;color:#fff;">9</div><div class="t" style="left:390.5px;top:704.19px;font-size:11px;line-height:11px;color:#fff;">0.</div><div class="t" style="left:-2.5px;top:721.19px;font-size:11px;line-height:11px;color:#000;">2</div><div class="t" style="left:25.4px;top:721.19px;font-size:11px;line-height:11px;color:#000;">13:40:06</div><div class="t" style="left:77.6px;top:721.19px;font-size:11px;line-height:11px;color:#000;">222.4</div><div class="t" style="left:123.3px;top:721.19px;font-size:11px;line-height:11px;color:#000;">13.020</div><div class="t" style="left:173.56px;top:721.19px;font-size:11px;line-height:11px;color:#000;">0.026</div><div class="t" style="left:218.66px;top:721.19px;font-size:11px;line-height:11px;color:#000;">0.311</div><div class="t" style="left:263.26px;top:721.19px;font-size:11px;line-height:11px;color:#000;">2.683</div><div class="t" style="left:305.7px;top:721.19px;font-size:11px;line-height:11px;color:#000;">26.533</div><div class="t" style="left:351.3px;top:721.19px;font-size:11px;line-height:11px;color:#000;">7</div><div class="t" style="left:390.5px;top:721.19px;font-size:11px;line-height:11px;color:#000;">0.</div><div class="t" style="left:-2.5px;top:738.19px;font-size:11px;line-height:11px;color:#000;">3</div><div class="t" style="left:25.4px;top:738.19px;font-size:11px;line-height:11px;color:#000;">13:53:51</div><div class="t" style="left:77.6px;top:738.19px;font-size:11px;line-height:11px;color:#000;">100.0</div><div class="t" style="left:126.36px;top:738.19px;font-size:11px;line-height:11px;color:#000;">9.723</div><div class="t" style="left:173.56px;top:738.19px;font-size:11px;line-height:11px;color:#000;">0.040</div><div class="t" style="left:218.66px;top:738.19px;font-size:11px;line-height:11px;color:#000;">0.330</div><div class="t" style="left:263.26px;top:738.19px;font-size:11px;line-height:11px;color:#000;">2.391</div><div class="t" style="left:305.7px;top:738.19px;font-size:11px;line-height:11px;color:#000;">22.354</div><div class="t" style="left:351.3px;top:738.19px;font-size:11px;line-height:11px;color:#000;">7</div><div class="t" style="left:390.5px;top:738.19px;font-size:11px;line-height:11px;color:#000;">1.</div><div style="left:402px;top:677px;width:1px;height:167px;background:#fff"></div><div style="left:0px;top:827px;width:402px;height:16px;background-color:#d4d0c8;background-image:conic-gradient(#fff 25%, transparent 0 50%, #fff 0 75%, transparent 0);background-size:2px 2px;"></div><div style="left:-6px;top:827px;width:14px;height:14px;background:#d4d0c8;border:1px solid;border-color:#d4d0c8 #404040 #404040 #d4d0c8;box-shadow:inset 1px 1px #fff, inset -1px -1px #808080;"></div><svg style="left:0;top:0" width="1223" height="873"><polygon points="4.0,831.0 4.0,839.0 0.0,835.0" fill="#000"/></svg><div style="left:10px;top:827px;width:317px;height:14px;background:#d4d0c8;border:1px solid;border-color:#d4d0c8 #404040 #404040 #d4d0c8;box-shadow:inset 1px 1px #fff, inset -1px -1px #808080;"></div><div style="left:385px;top:827px;width:14px;height:14px;background:#d4d0c8;border:1px solid;border-color:#d4d0c8 #404040 #404040 #d4d0c8;box-shadow:inset 1px 1px #fff, inset -1px -1px #808080;"></div><svg style="left:0;top:0" width="1223" height="873"><polygon points="391.0,831.0 391.0,839.0 395.0,835.0" fill="#000"/></svg><div style="left:-2px;top:848px;width:38px;height:18px;background:#d4d0c8;border:1px solid;border-color:#808080 #fff #fff #808080;box-shadow:inset 1px 1px #404040, inset -1px -1px #d4d0c8;"></div><div class="t" style="left:4.5px;top:853.49px;font-size:11px;line-height:11px;color:#000;">25</div><div style="left:25px;top:849.5px;width:9px;height:5.5px;background:#d4d0c8;border:1px solid;border-color:#d4d0c8 #404040 #404040 #d4d0c8;box-shadow:inset 1px 1px #fff, inset -1px -1px #808080;"></div><svg style="left:0;top:0" width="1223" height="873"><polygon points="28.0,854.75 33.0,854.75 30.5,851.75" fill="#000"/></svg><div style="left:25px;top:857px;width:9px;height:6.5px;background:#d4d0c8;border:1px solid;border-color:#d4d0c8 #404040 #404040 #d4d0c8;box-shadow:inset 1px 1px #fff, inset -1px -1px #808080;"></div><svg style="left:0;top:0" width="1223" height="873"><polygon points="28.0,859.75 33.0,859.75 30.5,862.75" fill="#000"/></svg><div class="t" style="left:44.5px;top:853.49px;font-size:11px;line-height:11px;color:#000;">rows</div><div class="t" style="left:89px;top:853.49px;font-size:11px;line-height:11px;color:#000;">Avg 2:</div><div style="left:127px;top:848px;width:51px;height:18px;background:#d4d0c8;border:1px solid;border-color:#808080 #fff #fff #808080;box-shadow:inset 1px 1px #404040, inset -1px -1px #d4d0c8;"></div><div class="t" style="left:131px;top:853.49px;font-size:11px;line-height:11px;color:#000;">15.506</div><div class="t" style="left:196px;top:853.49px;font-size:11px;line-height:11px;color:#000;">Avg 3:</div><div style="left:233px;top:848px;width:51px;height:18px;background:#d4d0c8;border:1px solid;border-color:#808080 #fff #fff #808080;box-shadow:inset 1px 1px #404040, inset -1px -1px #d4d0c8;"></div><div class="t" style="left:236.5px;top:853.49px;font-size:11px;line-height:11px;color:#000;">13.578</div><div class="t" style="left:302px;top:853.49px;font-size:11px;line-height:11px;color:#000;">Avg 5:</div><div style="left:340px;top:848px;width:51px;height:18px;background:#d4d0c8;border:1px solid;border-color:#808080 #fff #fff #808080;box-shadow:inset 1px 1px #404040, inset -1px -1px #d4d0c8;"></div><div class="t" style="left:343.5px;top:853.49px;font-size:11px;line-height:11px;color:#000;">8.147</div><div style="left:405px;top:0px;width:818px;height:873px;background:#d4d0c8"></div><div style="left:409px;top:0px;width:1px;height:202px;background:#000"></div><div style="left:410px;top:0px;width:813px;height:201px;background:#dcdcdc"></div><div style="left:409px;top:201px;width:814px;height:1px;background:#000"></div><svg style="left:0;top:0" width="1223" height="873"><line x1="710.5" y1="0" x2="710.5" y2="201" stroke="#000" stroke-dasharray="3 3" shape-rendering="crispEdges"/><line x1="1011.5" y1="0" x2="1011.5" y2="201" stroke="#000" stroke-dasharray="3 3" shape-rendering="crispEdges"/><polyline points="864.6,0.0 861.0,1.6 856.1,3.7 850.3,6.2 844.0,9.0 837.8,11.8 832.0,14.5 826.8,17.0 821.7,19.3 816.7,21.7 811.5,24.3 806.0,27.3 800.0,31.0 793.2,35.6 785.8,41.0 778.0,46.9 770.3,52.8 763.1,58.3 756.9,63.0 751.7,66.8 747.2,70.1 743.2,72.9 739.6,75.6 735.9,78.3 732.2,81.2 728.4,84.3 724.6,87.5 720.9,90.6 717.3,93.8 713.7,97.1 710.2,100.4 706.7,103.9 703.1,107.5 699.6,111.2 696.2,114.8 693.0,118.3 690.0,121.5 687.3,124.4 684.7,127.2 682.4,129.8 680.1,132.2 678.0,134.6 676.0,137.0 674.1,139.4 672.2,141.7 670.5,143.9 668.9,146.1 667.4,148.1 666.0,150.0 664.7,151.8 663.5,153.6 662.4,155.3 661.4,156.8 660.6,158.1 660,159" fill="none" stroke="#f08080" stroke-width="3" stroke-linejoin="round"/><polyline points="874.3,0.0 870.7,1.9 865.7,4.5 859.8,7.7 853.5,11.0 847.1,14.4 841.2,17.5 835.7,20.4 830.2,23.2 824.8,26.0 819.3,28.9 813.7,31.9 808.1,35.0 802.2,38.4 796.0,42.2 789.7,46.0 783.6,49.8 778.0,53.3 773.1,56.5 769.1,59.2 765.8,61.5 762.9,63.6 760.2,65.6 757.4,67.7 754.2,70.0 750.6,72.6 746.8,75.3 742.8,78.1 738.9,80.9 735.0,83.8 731.2,86.7 727.6,89.6 724.0,92.5 720.5,95.5 717.0,98.6 713.6,101.7 710.2,105.0 706.9,108.5 703.6,112.3 700.3,116.1 697.1,120.0 694.0,123.6 690.9,127.0 687.9,130.1 684.8,132.9 681.8,135.6 679.0,138.1 676.3,140.6 674.0,143.0 672.0,145.3 670.3,147.5 668.9,149.6 667.6,151.6 666.3,153.6 665.0,155.6 663.7,157.6 662.4,159.6 661.2,161.5 660.0,163.4 659.0,165.3 658.0,167.0 657.1,168.6 656.3,170.2 655.5,171.7 654.9,173.1 654.3,174.6 654.0,176.0 653.8,177.5 653.8,179.0 653.9,180.5 654.1,181.9 654.5,183.3 655.0,184.6 655.7,185.8 656.6,187.1 657.6,188.2 658.8,189.3 660.1,190.2 661.4,191.0 662.8,191.6 664.3,192.0 665.8,192.3 667.5,192.5 669.4,192.7 671.5,192.8 673.9,192.9 676.7,193.0 679.7,193.0 682.6,193.0 685.5,192.9 688.0,192.8 690.2,192.6 692.2,192.4 694.0,192.2 695.8,191.8 697.5,191.4 699.3,191.0 701.1,190.5 702.7,189.9 704.4,189.3 706.1,188.6 707.9,187.9 710.0,187.0 712.3,186.1 714.8,185.2 717.4,184.2 720.1,183.0 722.9,181.7 725.7,180.2 728.4,178.6 731.0,176.8 733.6,175.0 736.5,172.8 739.9,170.3 743.9,167.4 748.8,163.9 754.5,159.7 760.7,155.3 767.0,150.7 773.2,146.2 778.9,142.1 784.1,138.3 789.1,134.7 793.9,131.2 798.6,127.7 803.3,124.2 808.1,120.7 813.0,117.2 817.9,113.6 822.8,110.1 827.6,106.6 832.5,103.0 837.4,99.3 842.3,95.5 847.3,91.6 852.2,87.6 857.2,83.6 862.0,79.7 866.6,75.9 871.1,72.2 875.4,68.5 879.6,64.9 883.8,61.3 887.8,57.9 891.9,54.5 895.9,51.3 900.0,48.2 903.9,45.2 907.8,42.2 911.6,39.2 915.2,36.0 918.7,32.7 922.1,29.2 925.4,25.6 928.6,22.1 931.7,18.7 934.7,15.6 937.7,12.5 940.8,9.5 943.7,6.5 946.4,3.9 948.6,1.6 950.3,0" fill="none" stroke="#1a961a" stroke-width="3" stroke-linejoin="round"/><text x="1061" y="197" font-family="Liberation Sans" font-weight="bold" font-size="14" fill="#000">3D</text><text x="1083.5" y="197" font-family="Liberation Sans" font-weight="bold" font-size="14" fill="#14a014">05</text><text x="1103.6" y="197" font-family="Liberation Sans" font-weight="bold" font-size="14" fill="#14a014">16</text><text x="1123.7" y="197" font-family="Liberation Sans" font-weight="bold" font-size="14" fill="#14a014">18</text><text x="1143.8" y="197" font-family="Liberation Sans" font-weight="bold" font-size="14" fill="#14a014">20</text><text x="1163.9" y="197" font-family="Liberation Sans" font-weight="bold" font-size="14" fill="#14a014">21</text><text x="1184.0" y="197" font-family="Liberation Sans" font-weight="bold" font-size="14" fill="#14a014">25</text><text x="1204.1" y="197" font-family="Liberation Sans" font-weight="bold" font-size="14" fill="#14a014">26</text><rect x="409" y="204" width="814" height="1" fill="#000"/><rect x="409" y="204" width="1" height="608" fill="#000"/><rect x="409" y="811" width="814" height="1" fill="#000"/><rect x="410" y="205" width="813" height="606" fill="#dcdcdc"/><rect x="486" y="205" width="700" height="605" fill="#00c8c8"/><rect x="486" y="205" width="700" height="2" fill="#30a8ac" opacity="0.8"/><rect x="486" y="809" width="700" height="1" fill="#30a8ac" opacity="0.8"/><rect x="410" y="202" width="813" height="2" fill="#e4e4e4"/><path d="M411.5 206 V810 M410 206.5 H486 M1186 206.5 H1223 M410 809.5 H486 M1186 809.5 H1223" stroke="#000" stroke-dasharray="1 1" shape-rendering="crispEdges" fill="none"/><line x1="410" y1="274.5" x2="1223" y2="274.5" stroke="#000" stroke-dasharray="3 3" shape-rendering="crispEdges"/><line x1="410" y1="382.5" x2="1223" y2="382.5" stroke="#000" stroke-dasharray="18 6" shape-rendering="crispEdges"/><line x1="410" y1="489.5" x2="1223" y2="489.5" stroke="#000" stroke-dasharray="3 3" shape-rendering="crispEdges"/><line x1="410" y1="597.5" x2="1223" y2="597.5" stroke="#000" stroke-dasharray="18 6" shape-rendering="crispEdges"/><line x1="410" y1="704.5" x2="1223" y2="704.5" stroke="#000" stroke-dasharray="3 3" shape-rendering="crispEdges"/><line x1="488.5" y1="205" x2="488.5" y2="810" stroke="#202040" stroke-dasharray="3 3" shape-rendering="crispEdges"/><line x1="823.5" y1="205" x2="823.5" y2="810" stroke="#000" stroke-dasharray="3 3" shape-rendering="crispEdges"/><text x="806" y="215.5" font-family="Liberation Sans" font-weight="bold" font-size="14" fill="#000">15:09</text><text x="411.5" y="394" font-family="Liberation Sans" font-weight="bold" font-size="14" fill="#000">20</text><text x="411.5" y="608.8" font-family="Liberation Sans" font-weight="bold" font-size="14" fill="#000">10</text><rect x="410" y="617" width="813" height="2" fill="#14aa14"/><polyline points="410.0,505.8 411.6,503.7 413.2,496.7 414.8,493.3 416.4,485.9 418.0,485.9 419.6,484.5" fill="none" stroke="#f26869" stroke-width="2.4" stroke-linejoin="round" stroke-linecap="round"/><polyline points="419.6,484.5 421.2,493.2 422.8,497.4 424.4,497.5 426.0,496.7 427.6,502.6 429.2,490.0" fill="none" stroke="#f26869" stroke-width="2.4" stroke-linejoin="round" stroke-linecap="round"/><polyline points="429.2,490.0 430.8,467.2 432.4,459.8 434.0,457.1 435.6,453.2 437.2,455.4 438.8,450.7" fill="none" stroke="#f26669" stroke-width="2.4" stroke-linejoin="round" stroke-linecap="round"/><polyline points="438.8,450.7 440.4,450.8 442.0,444.8 443.6,444.1 445.2,436.6 446.8,434.7 448.4,436.2" fill="none" stroke="#f26569" stroke-width="2.4" stroke-linejoin="round" stroke-linecap="round"/><polyline points="448.4,436.2 450.0,442.9 451.6,440.6 453.2,434.9 454.8,423.5 456.4,420.8 458.0,422.8" fill="none" stroke="#f26469" stroke-width="2.4" stroke-linejoin="round" stroke-linecap="round"/><polyline points="458.0,422.8 459.6,430.6 461.2,433.0 462.8,433.9 464.4,424.1 466.0,421.9 467.6,417.5" fill="none" stroke="#f26368" stroke-width="2.4" stroke-linejoin="round" stroke-linecap="round"/><polyline points="467.6,417.5 469.2,418.7 470.8,414.6 472.4,415.8 474.0,411.6 475.6,412.7 477.2,408.5" fill="none" stroke="#f25f63" stroke-width="2.4" stroke-linejoin="round" stroke-linecap="round"/><polyline points="477.2,408.5 478.8,410.6 480.4,407.3 482.0,411.5 483.6,410.2 485.2,413.4 486.8,409.2" fill="none" stroke="#f25d61" stroke-width="2.4" stroke-linejoin="round" stroke-linecap="round"/><polyline points="486.8,409.2 488.4,411.7 490.0,400.5 491.6,396.4 493.2,391.4 494.8,393.1 496.4,387.6" fill="none" stroke="#f25a5d" stroke-width="2.4" stroke-linejoin="round" stroke-linecap="round"/><polyline points="496.4,387.6 498.0,387.9 499.6,382.2 501.2,382.3 502.8,375.2 504.4,379.7 506.0,376.4" fill="none" stroke="#f25456" stroke-width="2.4" stroke-linejoin="round" stroke-linecap="round"/><polyline points="506.0,376.4 507.6,381.1 509.2,378.5 510.8,382.8 512.4,378.7 514.0,382.0 515.6,377.8" fill="none" stroke="#f25355" stroke-width="2.4" stroke-linejoin="round" stroke-linecap="round"/><polyline points="515.6,377.8 517.2,386.8 518.8,388.6 520.4,380.9 522.0,363.9 523.6,369.0 525.2,366.9" fill="none" stroke="#f25254" stroke-width="2.4" stroke-linejoin="round" stroke-linecap="round"/><polyline points="525.2,366.9 526.8,373.2 528.4,362.2 530.0,358.4 531.6,354.5 533.2,357.2 534.8,353.2" fill="none" stroke="#f24d4e" stroke-width="2.4" stroke-linejoin="round" stroke-linecap="round"/><polyline points="534.8,353.2 536.4,355.0 538.0,348.5 539.6,345.7 541.2,338.8 542.8,343.2 544.4,339.7" fill="none" stroke="#f24848" stroke-width="2.4" stroke-linejoin="round" stroke-linecap="round"/><polyline points="544.4,339.7 546.0,343.3 547.6,335.9 549.2,329.4 550.8,322.1 552.4,330.2 554.0,330.8" fill="none" stroke="#f24343" stroke-width="2.4" stroke-linejoin="round" stroke-linecap="round"/><polyline points="554.0,330.8 555.6,332.3 557.2,323.3 558.8,325.2 560.4,318.2 562.0,319.4 563.6,314.2" fill="none" stroke="#f23f3f" stroke-width="2.4" stroke-linejoin="round" stroke-linecap="round"/><polyline points="563.6,314.2 565.2,318.8 566.8,313.1 568.4,317.5 570.0,312.5 571.6,312.4 573.2,306.0" fill="none" stroke="#f23b3b" stroke-width="2.4" stroke-linejoin="round" stroke-linecap="round"/><polyline points="573.2,306.0 574.8,307.4 576.4,301.8 578.0,304.5 579.6,299.6 581.2,299.6 582.8,292.5" fill="none" stroke="#f23737" stroke-width="2.4" stroke-linejoin="round" stroke-linecap="round"/><polyline points="582.8,292.5 584.4,297.2 586.0,304.1 587.6,306.2 589.2,298.5 590.8,299.7 592.4,296.7" fill="none" stroke="#f23636" stroke-width="2.4" stroke-linejoin="round" stroke-linecap="round"/><polyline points="592.4,296.7 594.0,302.8 595.6,301.1 597.2,308.3 598.8,300.7 600.4,303.8 602.0,297.0" fill="none" stroke="#f23737" stroke-width="2.4" stroke-linejoin="round" stroke-linecap="round"/><polyline points="602.0,297.0 603.6,298.5 605.2,293.4 606.8,295.5 608.4,290.3 610.0,291.3 611.6,290.9" fill="none" stroke="#f23434" stroke-width="2.4" stroke-linejoin="round" stroke-linecap="round"/><polyline points="611.6,290.9 613.2,303.1 614.8,309.0 616.4,302.6 618.0,287.8 619.6,293.0 621.2,292.6" fill="none" stroke="#f23535" stroke-width="2.4" stroke-linejoin="round" stroke-linecap="round"/><polyline points="621.2,292.6 622.8,298.4 624.4,297.8 626.0,301.2 627.6,293.5 629.2,294.7 630.8,292.1" fill="none" stroke="#f23434" stroke-width="2.4" stroke-linejoin="round" stroke-linecap="round"/><polyline points="630.8,292.1 632.4,299.0 634.0,298.8 635.6,305.6 637.2,299.9 638.8,302.4 640.4,294.2" fill="none" stroke="#f23636" stroke-width="2.4" stroke-linejoin="round" stroke-linecap="round"/><polyline points="640.4,294.2 642.0,297.8 643.6,295.5 645.2,299.4 646.8,297.3 648.4,301.4 650.0,295.9" fill="none" stroke="#f23535" stroke-width="2.4" stroke-linejoin="round" stroke-linecap="round"/><polyline points="650.0,295.9 651.6,298.9 653.2,295.0 654.8,298.1 656.4,295.4 658.0,301.9 659.6,301.1" fill="none" stroke="#f23535" stroke-width="2.4" stroke-linejoin="round" stroke-linecap="round"/><polyline points="659.6,301.1 661.2,300.9 662.8,291.8 664.4,291.1 666.0,289.2 667.6,304.1 669.2,299.9" fill="none" stroke="#f23535" stroke-width="2.4" stroke-linejoin="round" stroke-linecap="round"/><polyline points="669.2,299.9 670.8,300.3 672.4,296.7 674.0,300.9 675.6,296.4 677.2,301.3 678.8,297.1" fill="none" stroke="#f23636" stroke-width="2.4" stroke-linejoin="round" stroke-linecap="round"/><polyline points="678.8,297.1 680.4,300.6 682.0,296.5 683.6,302.3 685.2,296.8 686.8,302.3 688.4,297.2" fill="none" stroke="#f23636" stroke-width="2.4" stroke-linejoin="round" stroke-linecap="round"/><polyline points="688.4,297.2 690.0,302.5 691.6,295.2 693.2,297.1 694.8,300.7 696.4,311.4 698.0,312.1" fill="none" stroke="#f23737" stroke-width="2.4" stroke-linejoin="round" stroke-linecap="round"/><polyline points="698.0,312.1 699.6,315.6 701.2,312.7 702.8,317.4 704.4,312.5 706.0,318.0 707.6,305.1" fill="none" stroke="#f23b3b" stroke-width="2.4" stroke-linejoin="round" stroke-linecap="round"/><polyline points="707.6,305.1 709.2,303.0 710.8,289.1 712.4,303.4 714.0,311.9 715.6,321.4 717.2,315.0" fill="none" stroke="#f23939" stroke-width="2.4" stroke-linejoin="round" stroke-linecap="round"/><polyline points="717.2,315.0 718.8,315.0 720.4,308.8 722.0,314.5 723.6,317.7 725.2,328.3 726.8,324.1" fill="none" stroke="#f23d3d" stroke-width="2.4" stroke-linejoin="round" stroke-linecap="round"/><polyline points="726.8,324.1 728.4,329.4 730.0,325.6 731.6,334.2 733.2,332.2 734.8,329.6 736.4,316.4" fill="none" stroke="#f24141" stroke-width="2.4" stroke-linejoin="round" stroke-linecap="round"/><polyline points="736.4,316.4 738.0,313.1 739.6,301.5 741.2,307.2 742.8,307.6 744.4,309.8 746.0,301.1" fill="none" stroke="#f23939" stroke-width="2.4" stroke-linejoin="round" stroke-linecap="round"/><polyline points="746.0,301.1 747.6,302.7 749.2,296.2 750.8,302.0 752.4,297.5 754.0,302.5 755.6,304.4" fill="none" stroke="#f23636" stroke-width="2.4" stroke-linejoin="round" stroke-linecap="round"/><polyline points="755.6,304.4 757.2,310.6 758.8,315.4 760.4,321.5 762.0,331.5 763.6,341.5 765.2,351.8" fill="none" stroke="#f24040" stroke-width="2.4" stroke-linejoin="round" stroke-linecap="round"/><polyline points="765.2,351.8 766.8,362.2 768.4,372.6 770.0,383.0 771.6,394.8 773.2,406.7 774.8,418.5" fill="none" stroke="#f25557" stroke-width="2.4" stroke-linejoin="round" stroke-linecap="round"/><polyline points="774.8,418.5 776.4,429.8 778.0,441.0 779.6,452.2 781.2,459.8 782.8,466.2 784.4,472.6" fill="none" stroke="#f26569" stroke-width="2.4" stroke-linejoin="round" stroke-linecap="round"/><polyline points="784.4,472.6 786.0,479.0 787.6,485.4 789.2,496.1 790.8,508.2 792.4,520.3 794.0,532.4" fill="none" stroke="#f26869" stroke-width="2.4" stroke-linejoin="round" stroke-linecap="round"/><polyline points="794.0,532.4 795.6,544.9 797.2,557.9 798.8,570.9 800.4,584.0 802.0,597.0 803.6,603.5" fill="none" stroke="#f09898" stroke-width="2.4" stroke-linejoin="round" stroke-linecap="round"/><polyline points="803.6,603.5 805.2,617.3 806.8,621.8 808.4,639.7 810.0,660.3 811.6,669.6 813.2,667.8" fill="none" stroke="#f2c7c7" stroke-width="2.4" stroke-linejoin="round" stroke-linecap="round"/><polyline points="813.2,667.8 814.8,672.2 816.4,665.0 818.0,665.4 819.6,666.8 821.2,674.9 822.8,657.2" fill="none" stroke="#f2cdcd" stroke-width="2.4" stroke-linejoin="round" stroke-linecap="round"/><polyline points="822.8,657.2 824.4,661.2 826.0,659.7 827.6,668.1 829.2,661.6 830.8,663.5 832.4,655.7" fill="none" stroke="#f2cdcd" stroke-width="2.4" stroke-linejoin="round" stroke-linecap="round"/><polyline points="832.4,655.7 834.0,655.5 835.6,648.7 837.2,648.7 838.8,641.4 840.4,641.9 842.0,634.4" fill="none" stroke="#f2cbcb" stroke-width="2.4" stroke-linejoin="round" stroke-linecap="round"/><polyline points="842.0,634.4 843.6,633.5 845.2,630.1 846.8,637.3 848.4,636.0 850.0,637.8 851.6,627.1" fill="none" stroke="#f2c3c3" stroke-width="2.4" stroke-linejoin="round" stroke-linecap="round"/><polyline points="851.6,627.1 853.2,626.3 854.8,615.8 856.4,616.5 858.0,608.0 859.6,608.2 861.2,599.0" fill="none" stroke="#f1b6b6" stroke-width="2.4" stroke-linejoin="round" stroke-linecap="round"/><polyline points="861.2,599.0 862.8,595.8 864.4,585.9 866.0,583.8 867.6,576.1 869.2,576.4 870.8,569.7" fill="none" stroke="#f0a2a2" stroke-width="2.4" stroke-linejoin="round" stroke-linecap="round"/><polyline points="870.8,569.7 872.4,568.9 874.0,561.9 875.6,563.7 877.2,565.1 878.8,572.0 880.4,566.7" fill="none" stroke="#f09595" stroke-width="2.4" stroke-linejoin="round" stroke-linecap="round"/><polyline points="880.4,566.7 882.0,566.5 883.6,561.2 885.2,573.3 886.8,571.5 888.4,561.5 890.0,555.6" fill="none" stroke="#f09393" stroke-width="2.4" stroke-linejoin="round" stroke-linecap="round"/><polyline points="890.0,555.6 891.6,561.7 893.2,561.7 894.8,568.5 896.4,558.0 898.0,556.0 899.6,550.5" fill="none" stroke="#f18e8e" stroke-width="2.4" stroke-linejoin="round" stroke-linecap="round"/><polyline points="899.6,550.5 901.2,550.8 902.8,545.3 904.4,546.6 906.0,544.7 907.6,548.4 909.2,546.0" fill="none" stroke="#f18484" stroke-width="2.4" stroke-linejoin="round" stroke-linecap="round"/><polyline points="909.2,546.0 910.8,550.5 912.4,535.5 914.0,525.9 915.6,523.2 917.2,526.0 918.8,522.9" fill="none" stroke="#f17878" stroke-width="2.4" stroke-linejoin="round" stroke-linecap="round"/><polyline points="918.8,522.9 920.4,525.8 922.0,518.8 923.6,516.6 925.2,510.4 926.8,510.7 928.4,506.8" fill="none" stroke="#f26a6a" stroke-width="2.4" stroke-linejoin="round" stroke-linecap="round"/><polyline points="928.4,506.8 930.0,506.9 931.6,496.9 933.2,494.0 934.8,492.3 936.4,497.1 938.0,496.3" fill="none" stroke="#f26869" stroke-width="2.4" stroke-linejoin="round" stroke-linecap="round"/><polyline points="938.0,496.3 939.6,496.2 941.2,490.2 942.8,489.6 944.4,482.3 946.0,485.4 947.6,484.5" fill="none" stroke="#f26769" stroke-width="2.4" stroke-linejoin="round" stroke-linecap="round"/><polyline points="947.6,484.5 949.2,489.9 950.8,489.3 952.4,492.2 954.0,487.5 955.6,489.4 957.2,486.2" fill="none" stroke="#f26769" stroke-width="2.4" stroke-linejoin="round" stroke-linecap="round"/><polyline points="957.2,486.2 958.8,488.1 960.4,483.9 962.0,482.7 963.6,477.0 965.2,476.4 966.8,469.5" fill="none" stroke="#f26769" stroke-width="2.4" stroke-linejoin="round" stroke-linecap="round"/><polyline points="966.8,469.5 968.4,466.3 970.0,458.1 971.6,455.5 973.2,449.9 974.8,449.0 976.4,443.1" fill="none" stroke="#f26669" stroke-width="2.4" stroke-linejoin="round" stroke-linecap="round"/><polyline points="976.4,443.1 978.0,442.6 979.6,437.0 981.2,437.9 982.8,431.4 984.4,430.4 986.0,424.4" fill="none" stroke="#f26469" stroke-width="2.4" stroke-linejoin="round" stroke-linecap="round"/><polyline points="986.0,424.4 987.6,425.0 989.2,425.7 990.8,431.7 992.4,431.8 994.0,433.2 995.6,429.0" fill="none" stroke="#f26468" stroke-width="2.4" stroke-linejoin="round" stroke-linecap="round"/><polyline points="995.6,429.0 997.2,431.8 998.8,428.0 1000.4,428.7 1002.0,424.4 1003.6,426.4 1005.2,421.8" fill="none" stroke="#f26368" stroke-width="2.4" stroke-linejoin="round" stroke-linecap="round"/><polyline points="1005.2,421.8 1006.8,423.0 1008.4,420.5 1010.0,424.6 1011.6,423.3 1013.2,427.1 1014.8,424.3" fill="none" stroke="#f26266" stroke-width="2.4" stroke-linejoin="round" stroke-linecap="round"/><polyline points="1014.8,424.3 1016.4,426.2 1018.0,421.2 1019.6,422.3 1021.2,418.0 1022.8,419.1 1024.4,415.9" fill="none" stroke="#f26166" stroke-width="2.4" stroke-linejoin="round" stroke-linecap="round"/><polyline points="1024.4,415.9 1026.0,421.9 1027.6,422.2 1029.2,427.7 1030.8,427.2 1032.4,433.1 1034.0,431.4" fill="none" stroke="#f26367" stroke-width="2.4" stroke-linejoin="round" stroke-linecap="round"/><polyline points="1034.0,431.4 1035.6,432.7 1037.2,429.1 1038.8,430.1 1040.4,427.1 1042.0,427.9 1043.6,429.2" fill="none" stroke="#f26469" stroke-width="2.4" stroke-linejoin="round" stroke-linecap="round"/><polyline points="1043.6,429.2 1045.2,434.6 1046.8,435.4 1048.4,438.6 1050.0,435.6 1051.6,438.0 1053.2,435.5" fill="none" stroke="#f26469" stroke-width="2.4" stroke-linejoin="round" stroke-linecap="round"/><polyline points="1053.2,435.5 1054.8,437.6 1056.4,435.5 1058.0,437.3 1059.6,435.2 1061.2,438.1 1062.8,435.6" fill="none" stroke="#f26469" stroke-width="2.4" stroke-linejoin="round" stroke-linecap="round"/><polyline points="1062.8,435.6 1064.4,438.7 1066.0,436.9 1067.6,440.8 1069.2,438.6 1070.8,441.9 1072.4,439.5" fill="none" stroke="#f26569" stroke-width="2.4" stroke-linejoin="round" stroke-linecap="round"/><polyline points="1072.4,439.5 1074.0,440.4 1075.6,434.0 1077.2,438.7 1078.8,439.2 1080.4,445.4 1082.0,445.0" fill="none" stroke="#f26569" stroke-width="2.4" stroke-linejoin="round" stroke-linecap="round"/><polyline points="1082.0,445.0 1083.6,450.7 1085.2,448.9 1086.8,453.5 1088.4,451.5 1090.0,455.5 1091.6,454.2" fill="none" stroke="#f26569" stroke-width="2.4" stroke-linejoin="round" stroke-linecap="round"/><polyline points="1091.6,454.2 1093.2,457.3 1094.8,456.6 1096.4,459.5 1098.0,458.0 1099.6,461.8 1101.2,457.4" fill="none" stroke="#f26669" stroke-width="2.4" stroke-linejoin="round" stroke-linecap="round"/><polyline points="1101.2,457.4 1102.8,455.9 1104.4,449.8 1106.0,450.0 1107.6,444.9 1109.2,448.8 1110.8,447.9" fill="none" stroke="#f26569" stroke-width="2.4" stroke-linejoin="round" stroke-linecap="round"/><polyline points="1110.8,447.9 1112.4,451.4 1114.0,450.1 1115.6,453.7 1117.2,450.6 1118.8,451.7 1120.4,447.2" fill="none" stroke="#f26569" stroke-width="2.4" stroke-linejoin="round" stroke-linecap="round"/><polyline points="1120.4,447.2 1122.0,449.7 1123.6,444.9 1125.2,446.0 1126.8,441.6 1128.4,443.3 1130.0,439.4" fill="none" stroke="#f26569" stroke-width="2.4" stroke-linejoin="round" stroke-linecap="round"/><polyline points="1130.0,439.4 1131.6,440.0 1133.2,437.0 1134.8,441.8 1136.4,441.1 1138.0,445.7 1139.6,445.4" fill="none" stroke="#f26569" stroke-width="2.4" stroke-linejoin="round" stroke-linecap="round"/><polyline points="1139.6,445.4 1141.2,449.7 1142.8,444.9 1144.4,438.9 1146.0,433.0 1147.6,434.0 1149.2,431.2" fill="none" stroke="#f26569" stroke-width="2.4" stroke-linejoin="round" stroke-linecap="round"/><polyline points="1149.2,431.2 1150.8,432.1 1152.4,428.7 1154.0,430.2 1155.6,427.2 1157.2,432.1 1158.8,430.6" fill="none" stroke="#f26469" stroke-width="2.4" stroke-linejoin="round" stroke-linecap="round"/><polyline points="1158.8,430.6 1160.4,435.7 1162.0,433.9 1163.6,438.8 1165.2,433.9 1166.8,433.3 1168.4,426.5" fill="none" stroke="#f26469" stroke-width="2.4" stroke-linejoin="round" stroke-linecap="round"/><polyline points="1168.4,426.5 1170.0,427.2 1171.6,423.3 1173.2,425.1 1174.8,421.7 1176.4,424.6 1178.0,420.2" fill="none" stroke="#f26267" stroke-width="2.4" stroke-linejoin="round" stroke-linecap="round"/><polyline points="1178.0,420.2 1179.6,422.5 1181.2,419.0 1182.8,428.2 1184.4,428.6 1186.0,423.4 1187.6,422.6" fill="none" stroke="#f26266" stroke-width="2.4" stroke-linejoin="round" stroke-linecap="round"/><polyline points="1187.6,422.6 1189.2,428.6 1190.8,427.0 1192.4,431.9 1194.0,430.1 1195.6,435.2 1197.2,433.6" fill="none" stroke="#f26469" stroke-width="2.4" stroke-linejoin="round" stroke-linecap="round"/><polyline points="1197.2,433.6 1198.8,437.9 1200.4,436.7 1202.0,436.6 1203.6,432.6 1205.2,432.9 1206.8,428.4" fill="none" stroke="#f26469" stroke-width="2.4" stroke-linejoin="round" stroke-linecap="round"/><polyline points="1206.8,428.4 1208.4,430.1 1210.0,425.4 1211.6,427.0 1213.2,422.2 1214.8,424.6 1216.4,422.7" fill="none" stroke="#f26367" stroke-width="2.4" stroke-linejoin="round" stroke-linecap="round"/><polyline points="1216.4,422.7 1218.0,425.6 1219.6,422.5 1221.2,426.0 1222.8,423.5" fill="none" stroke="#f26267" stroke-width="2.4" stroke-linejoin="round" stroke-linecap="round"/></svg><div style="left:410px;top:819px;width:813px;height:1px;background:#808080"></div><div style="left:411px;top:820px;width:812px;height:1px;background:#fff"></div><div style="left:410px;top:819px;width:1px;height:52px;background:#808080"></div><div style="left:411px;top:820px;width:1px;height:50px;background:#fff"></div><div style="left:410px;top:870px;width:813px;height:1px;background:#808080"></div><div style="left:410px;top:871px;width:813px;height:1px;background:#fff"></div><div style="left:415px;top:814px;width:50px;height:12px;background:#d4d0c8"></div><div class="t" style="left:418px;top:816.49px;font-size:11px;line-height:11px;color:#000;">Display</div><div style="left:416.5px;top:830px;width:11px;height:11px;background:#fff;border:1px solid;border-color:#808080 #fff #fff #808080;box-shadow:inset 1px 1px #404040, inset -1px -1px #d4d0c8;"></div><svg style="left:416.5px;top:830px" width="13" height="13"><path d="M3 5h1v1h1v1h1v-1h1v-1h1v-1h1v-1h1v3h-1v1h-1v1h-1v1h-1v1h-1v-1h-1v-1h-1v-1h-1z" fill="#000"/></svg><div style="left:436px;top:828px;width:30px;height:16px;overflow:hidden;position:absolute"><div class="t" style="left:0;top:5.289999999999954px;font-size:11px;line-height:11px">Tracks</div></div><div style="left:470.5px;top:830px;width:11px;height:11px;background:#fff;border:1px solid;border-color:#808080 #fff #fff #808080;box-shadow:inset 1px 1px #404040, inset -1px -1px #d4d0c8;"></div><div class="t" style="left:488.6px;top:833.29px;font-size:11px;line-height:11px;color:#000;">Pnts</div><div style="left:515px;top:830px;width:11px;height:11px;background:#fff;border:1px solid;border-color:#808080 #fff #fff #808080;box-shadow:inset 1px 1px #404040, inset -1px -1px #d4d0c8;"></div><svg style="left:515px;top:830px" width="13" height="13"><path d="M3 5h1v1h1v1h1v-1h1v-1h1v-1h1v-1h1v3h-1v1h-1v1h-1v1h-1v1h-1v-1h-1v-1h-1v-1h-1z" fill="#000"/></svg><div class="t" style="left:533.2px;top:833.29px;font-size:11px;line-height:11px;color:#000;">SDoP</div><div style="left:566.5px;top:830px;width:11px;height:11px;background:#fff;border:1px solid;border-color:#808080 #fff #fff #808080;box-shadow:inset 1px 1px #404040, inset -1px -1px #d4d0c8;"></div><svg style="left:566.5px;top:830px" width="13" height="13"><path d="M3 5h1v1h1v1h1v-1h1v-1h1v-1h1v-1h1v3h-1v1h-1v1h-1v1h-1v1h-1v-1h-1v-1h-1v-1h-1z" fill="#000"/></svg><div class="t" style="left:585px;top:833.29px;font-size:11px;line-height:11px;color:#000;">Vic.</div><div style="left:610.6px;top:830px;width:11px;height:11px;background:#fff;border:1px solid;border-color:#808080 #fff #fff #808080;box-shadow:inset 1px 1px #404040, inset -1px -1px #d4d0c8;"></div><div class="t" style="left:629px;top:833.29px;font-size:11px;line-height:11px;color:#000;">Ovl.</div><div style="left:655.7px;top:830px;width:11px;height:11px;background:#fff;border:1px solid;border-color:#808080 #fff #fff #808080;box-shadow:inset 1px 1px #404040, inset -1px -1px #d4d0c8;"></div><svg style="left:655.7px;top:830px" width="13" height="13"><path d="M3 5h1v1h1v1h1v-1h1v-1h1v-1h1v-1h1v3h-1v1h-1v1h-1v1h-1v1h-1v-1h-1v-1h-1v-1h-1z" fill="#000"/></svg><div class="t" style="left:674.4px;top:833.29px;font-size:11px;line-height:11px;color:#000;">Sats</div><div style="left:701.4px;top:830px;width:11px;height:11px;background:#fff;border:1px solid;border-color:#808080 #fff #fff #808080;box-shadow:inset 1px 1px #404040, inset -1px -1px #d4d0c8;"></div><div class="t" style="left:719.9px;top:833.29px;font-size:11px;line-height:11px;color:#000;">Acc</div><div style="left:746.6px;top:830px;width:11px;height:11px;background:#fff;border:1px solid;border-color:#808080 #fff #fff #808080;box-shadow:inset 1px 1px #404040, inset -1px -1px #d4d0c8;"></div><div class="t" style="left:765px;top:833.29px;font-size:11px;line-height:11px;color:#000;">50m</div><div style="left:416px;top:850px;width:13px;height:8px;background:#d4d0c8;border:1px solid;border-color:#d4d0c8 #404040 #404040 #d4d0c8;box-shadow:inset 1px 1px #fff, inset -1px -1px #808080;"></div><svg style="left:0;top:0" width="1223" height="873"><polygon points="420.5,856.5 426.5,856.5 423.5,853.5" fill="#000"/></svg><div style="left:416px;top:860px;width:13px;height:8px;background:#d4d0c8;border:1px solid;border-color:#d4d0c8 #404040 #404040 #d4d0c8;box-shadow:inset 1px 1px #fff, inset -1px -1px #808080;"></div><svg style="left:0;top:0" width="1223" height="873"><polygon points="420.5,863.5 426.5,863.5 423.5,866.5" fill="#000"/></svg><svg style="left:446.5px;top:854px" width="12" height="12"><circle cx="6" cy="6" r="5" fill="#fff"/><path d="M2.11 9.89 A5.5 5.5 0 0 1 9.89 2.11" stroke="#808080" fill="none"/><path d="M9.89 2.11 A5.5 5.5 0 0 1 2.11 9.89" stroke="#fff" fill="none"/><path d="M2.82 9.18 A4.5 4.5 0 0 1 9.18 2.82" stroke="#404040" fill="none"/><path d="M9.18 2.82 A4.5 4.5 0 0 1 2.82 9.18" stroke="#d4d0c8" fill="none"/><circle cx="6" cy="6" r="2" fill="#000"/></svg><div class="t" style="left:464.6px;top:856.19px;font-size:11px;line-height:11px;color:#000;">knots</div><svg style="left:499px;top:854px" width="12" height="12"><circle cx="6" cy="6" r="5" fill="#fff"/><path d="M2.11 9.89 A5.5 5.5 0 0 1 9.89 2.11" stroke="#808080" fill="none"/><path d="M9.89 2.11 A5.5 5.5 0 0 1 2.11 9.89" stroke="#fff" fill="none"/><path d="M2.82 9.18 A4.5 4.5 0 0 1 9.18 2.82" stroke="#404040" fill="none"/><path d="M9.18 2.82 A4.5 4.5 0 0 1 2.82 9.18" stroke="#d4d0c8" fill="none"/></svg><div class="t" style="left:516.8px;top:856.19px;font-size:11px;line-height:11px;color:#000;">km/h</div><svg style="left:551px;top:854px" width="12" height="12"><circle cx="6" cy="6" r="5" fill="#fff"/><path d="M2.11 9.89 A5.5 5.5 0 0 1 9.89 2.11" stroke="#808080" fill="none"/><path d="M9.89 2.11 A5.5 5.5 0 0 1 2.11 9.89" stroke="#fff" fill="none"/><path d="M2.82 9.18 A4.5 4.5 0 0 1 9.18 2.82" stroke="#404040" fill="none"/><path d="M9.18 2.82 A4.5 4.5 0 0 1 2.82 9.18" stroke="#d4d0c8" fill="none"/></svg><div class="t" style="left:570px;top:856.19px;font-size:11px;line-height:11px;color:#000;">mph</div><div style="left:601px;top:850px;width:28px;height:18px;background:#d4d0c8;border:1px solid;border-color:#fff #404040 #404040 #fff;box-shadow:inset -1px -1px #808080;"></div><div class="t" style="left:611.5px;top:855.99px;font-size:11px;line-height:11px;color:#000;">&lt;</div><div style="left:634px;top:850px;width:36px;height:18px;background:#d4d0c8;border:1px solid;border-color:#fff #404040 #404040 #fff;box-shadow:inset -1px -1px #808080;"></div><div class="t" style="left:640.5px;top:855.99px;font-size:11px;line-height:11px;color:#000;">Stop</div><div style="left:673.5px;top:850px;width:28px;height:18px;background:#d4d0c8;border:1px solid;border-color:#fff #404040 #404040 #fff;box-shadow:inset -1px -1px #808080;"></div><div class="t" style="left:684.5px;top:855.99px;font-size:11px;line-height:11px;color:#000;">&gt;</div><div class="t" style="left:707px;top:855.99px;font-size:11px;line-height:11px;color:#000;">Speed:</div><div style="left:746px;top:848.5px;width:48px;height:18px;background:#d4d0c8;border:1px solid;border-color:#808080 #fff #fff #808080;box-shadow:inset 1px 1px #404040, inset -1px -1px #d4d0c8;"></div><div class="t" style="left:751px;top:853.99px;font-size:11px;line-height:11px;color:#000;">0.10s</div><div style="left:783px;top:850px;width:9px;height:6px;background:#d4d0c8;border:1px solid;border-color:#d4d0c8 #404040 #404040 #d4d0c8;box-shadow:inset 1px 1px #fff, inset -1px -1px #808080;"></div><svg style="left:0;top:0" width="1223" height="873"><polygon points="786.0,855.5 791.0,855.5 788.5,852.5" fill="#000"/></svg><div style="left:783px;top:858px;width:9px;height:6.5px;background:#d4d0c8;border:1px solid;border-color:#d4d0c8 #404040 #404040 #d4d0c8;box-shadow:inset 1px 1px #fff, inset -1px -1px #808080;"></div><svg style="left:0;top:0" width="1223" height="873"><polygon points="786.0,860.75 791.0,860.75 788.5,863.75" fill="#000"/></svg>
</body></html>
